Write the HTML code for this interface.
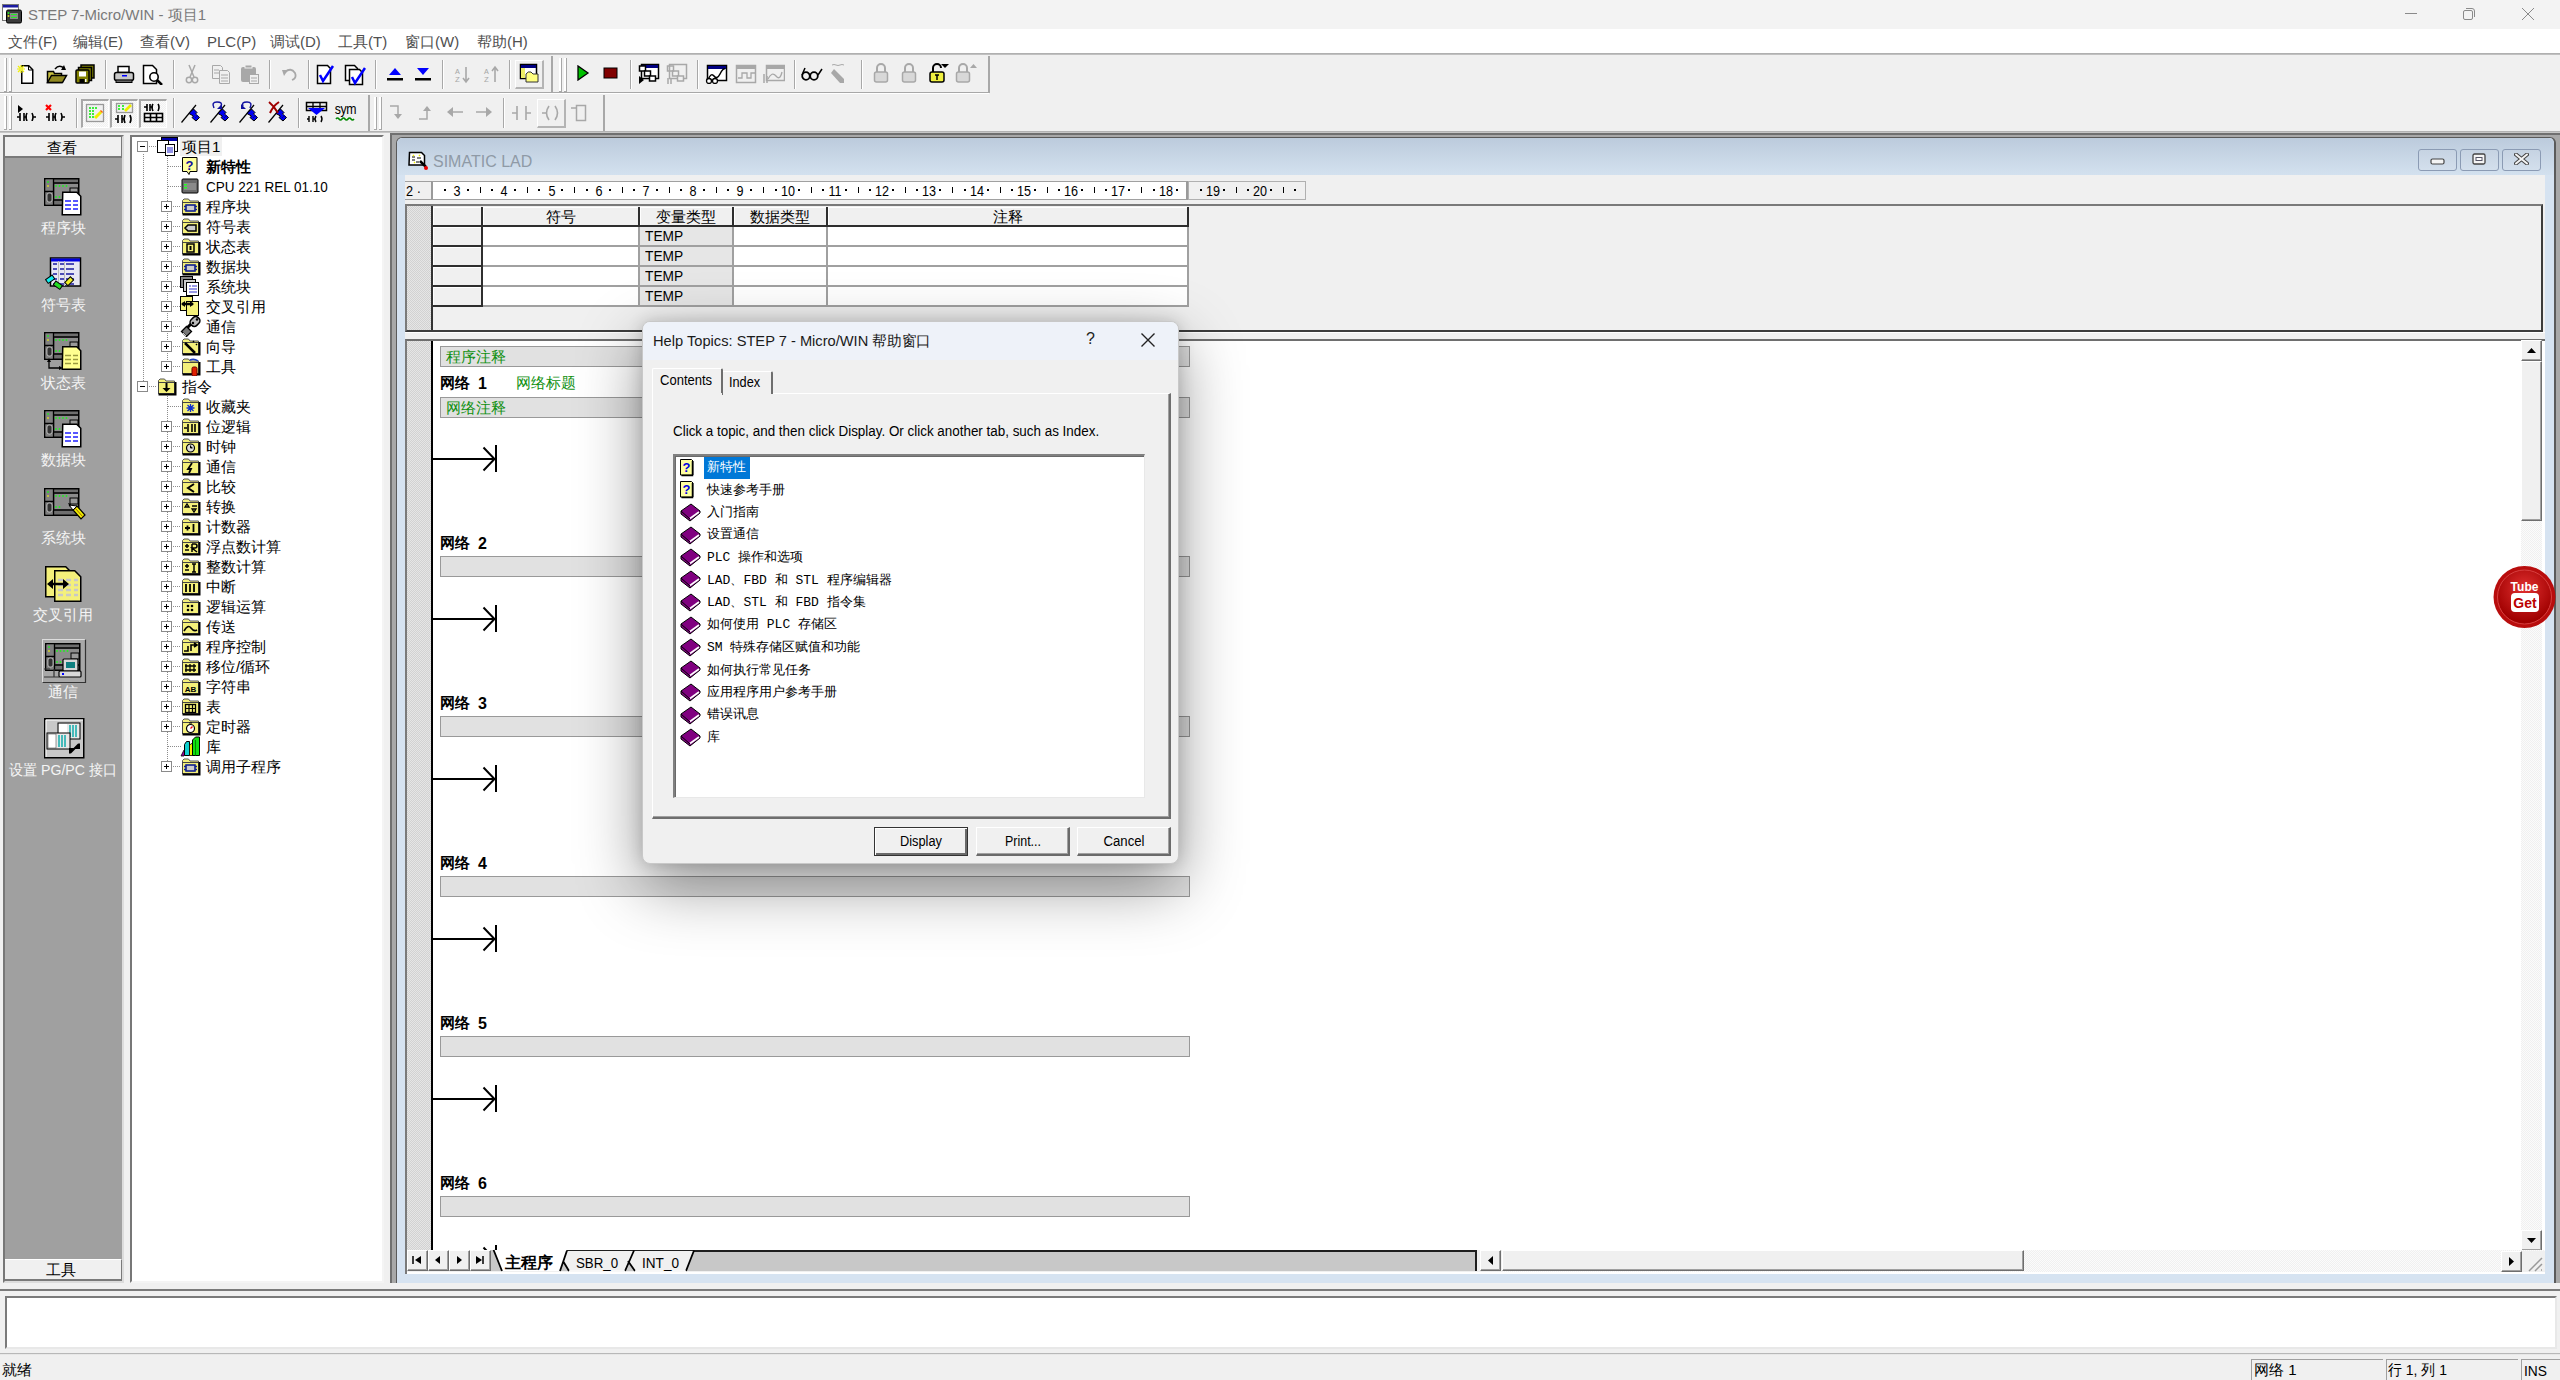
<!DOCTYPE html>
<html><head><meta charset="utf-8">
<style>
*{box-sizing:border-box;margin:0;padding:0}
html,body{width:2560px;height:1380px;overflow:hidden;background:#f0f0f0;font-family:"Liberation Sans",sans-serif;position:relative}
.a{position:absolute}
.t{position:absolute;white-space:nowrap;line-height:1}
.c{position:absolute;white-space:nowrap;line-height:1;text-align:center}
.dv{background:repeating-linear-gradient(to bottom,#8c8c8c 0 1px,transparent 1px 2px)}
.dh{background:repeating-linear-gradient(to right,#8c8c8c 0 1px,transparent 1px 2px)}
.chkl{background-color:#fbfbfb;background-image:linear-gradient(45deg,#f0f0f0 25%,transparent 25%,transparent 75%,#f0f0f0 75%),linear-gradient(45deg,#f0f0f0 25%,transparent 25%,transparent 75%,#f0f0f0 75%);background-size:2px 2px;background-position:0 0,1px 1px}
.chk{background-color:#e6e6e6;background-image:linear-gradient(45deg,#d2d2d2 25%,transparent 25%,transparent 75%,#d2d2d2 75%),linear-gradient(45deg,#d2d2d2 25%,transparent 25%,transparent 75%,#d2d2d2 75%);background-size:2px 2px;background-position:0 0,1px 1px}
</style></head><body>

<div class="a" style="left:0px;top:0px;width:2560px;height:29px;background:#f3f3f3"></div>
<div class="t" style="left:28px;top:7px;font-size:15px;color:#7a7a7a;font-weight:400;">STEP 7-Micro/WIN - 项目1</div>
<svg class="a" style="left:2px;top:4px" width="20" height="20" viewBox="0 0 20 20"><rect x="0.5" y="0.5" width="16" height="16" fill="#fff" stroke="#777"/><rect x="1" y="1" width="15" height="2.5" fill="#1a1aa0"/><rect x="4.5" y="6" width="15" height="13" rx="1.5" fill="#3a3a3a" stroke="#000"/><rect x="8" y="9" width="8" height="6" fill="#8a8a8a"/><circle cx="6.5" cy="9" r="1" fill="#2e2"/><circle cx="6.5" cy="12" r="1" fill="#dd2"/><path d="M9 10.5h6M9 13.5h6" stroke="#2e2" stroke-width="1"/></svg>
<div class="a" style="left:2405px;top:13px;width:12px;height:1px;background:#8a8a8a"></div>
<svg class="a" style="left:2462px;top:7px" width="14" height="14" viewBox="0 0 14 14"><rect x="1.5" y="3.5" width="9" height="9" rx="1.5" fill="none" stroke="#8a8a8a"/><path d="M4 1.5h6a2.5 2.5 0 0 1 2.5 2.5v6" fill="none" stroke="#8a8a8a"/></svg>
<svg class="a" style="left:2521px;top:7px" width="14" height="14" viewBox="0 0 14 14"><path d="M1 1L13 13M13 1L1 13" stroke="#8a8a8a" stroke-width="1"/></svg>
<div class="a" style="left:0px;top:29px;width:2560px;height:24px;background:#fff"></div>
<div class="a" style="left:0px;top:53px;width:2560px;height:2px;background:linear-gradient(#a8a8a8,#c8c8c8)"></div>
<div class="t" style="left:8px;top:34px;font-size:15px;color:#505050;font-weight:400;">文件(F)</div>
<div class="t" style="left:73px;top:34px;font-size:15px;color:#505050;font-weight:400;">编辑(E)</div>
<div class="t" style="left:140px;top:34px;font-size:15px;color:#505050;font-weight:400;">查看(V)</div>
<div class="t" style="left:207px;top:34px;font-size:15px;color:#505050;font-weight:400;">PLC(P)</div>
<div class="t" style="left:270px;top:34px;font-size:15px;color:#505050;font-weight:400;">调试(D)</div>
<div class="t" style="left:338px;top:34px;font-size:15px;color:#505050;font-weight:400;">工具(T)</div>
<div class="t" style="left:405px;top:34px;font-size:15px;color:#505050;font-weight:400;">窗口(W)</div>
<div class="t" style="left:477px;top:34px;font-size:15px;color:#505050;font-weight:400;">帮助(H)</div>
<div class="a" style="left:0px;top:131px;width:2560px;height:2px;background:linear-gradient(#a8a8a8,#d0d0d0)"></div>
<div class="a" style="left:3px;top:135px;width:121px;height:1148px;background:#a0a0a0;border:2px solid #777;border-right-color:#dcdcdc;border-bottom-color:#dcdcdc"></div>
<div class="a" style="left:5px;top:137px;width:117px;height:21px;background:#f0f0f0;border-bottom:2px solid #7a7a7a;border-right:1px solid #7a7a7a"></div>
<div class="c" style="left:3px;width:117px;top:140px;font-size:15px;color:#000">查看</div>
<div class="a" style="left:5px;top:1259px;width:117px;height:22px;background:#f0f0f0;border-top:1px solid #fff;border-bottom:2px solid #7a7a7a;border-right:1px solid #7a7a7a"></div>
<div class="c" style="left:2px;width:117px;top:1262px;font-size:15px;color:#000">工具</div>
<div class="c" style="left:4px;width:118px;top:220px;font-size:15px;color:#f4f4f4;">程序块</div>
<div class="c" style="left:4px;width:118px;top:297px;font-size:15px;color:#f4f4f4;">符号表</div>
<div class="c" style="left:4px;width:118px;top:375px;font-size:15px;color:#f4f4f4;">状态表</div>
<div class="c" style="left:4px;width:118px;top:452px;font-size:15px;color:#f4f4f4;">数据块</div>
<div class="c" style="left:4px;width:118px;top:530px;font-size:15px;color:#f4f4f4;">系统块</div>
<div class="c" style="left:4px;width:118px;top:607px;font-size:15px;color:#f4f4f4;">交叉引用</div>
<div class="c" style="left:4px;width:118px;top:684px;font-size:15px;color:#f4f4f4;">通信</div>
<div class="c" style="left:4px;width:118px;top:762px;font-size:15px;color:#f4f4f4;transform:scaleX(.94);">设置 PG/PC 接口</div>
<div class="a" style="left:130px;top:135px;width:254px;height:1148px;background:#fff;border:2px solid #777;border-right-color:#f4f4f4;border-bottom-color:#f4f4f4"></div>
<div class="a" style="left:390px;top:133px;width:2170px;height:1150px;background:#a8a8a8;border-top:2px solid #707070;border-left:2px solid #707070"></div>
<div class="a" style="left:396px;top:137px;width:2160px;height:1146px;background:#d6e3f1;border-radius:6px 6px 0 0;border:1px solid #5a5a5a;border-right:2px solid #5a5a5a;border-bottom:none"></div>
<div class="a" style="left:397px;top:138px;width:2157px;height:37px;background:linear-gradient(#bccbdc,#d3e1ef);border-radius:6px 6px 0 0"></div>
<div class="a" style="left:405px;top:175px;width:2140px;height:1099px;background:#f0f0f0"></div>
<div class="a" style="left:0px;top:1289px;width:2560px;height:2px;background:#7a7a7a"></div>
<div class="a" style="left:5px;top:1296px;width:2552px;height:53px;background:#fff;border:2px solid #7a7a7a;border-right-color:#e8e8e8;border-bottom-color:#e8e8e8"></div>
<div class="a" style="left:0px;top:1353px;width:2560px;height:2px;background:linear-gradient(#a0a0a0,#fff)"></div>
<div class="t" style="left:2px;top:1362px;font-size:15px;color:#000;font-weight:400;">就绪</div>
<div class="a dv" style="left:143px;top:154px;width:1px;height:232px;"></div>
<div class="a dv" style="left:167px;top:156px;width:1px;height:45px;"></div>
<div class="a dv" style="left:167px;top:213px;width:1px;height:153px;"></div>
<div class="a dv" style="left:167px;top:396px;width:1px;height:370px;"></div>
<div class="a" style="left:137px;top:141px;width:11px;height:11px;background:#fff;border:1px solid #8a8a8a"></div>
<div class="a" style="left:140px;top:146px;width:5px;height:1px;background:#000"></div>
<div class="a dh" style="left:149px;top:146px;width:7px;height:1px;"></div>
<svg class="a" style="left:157px;top:137px" width="22" height="19" viewBox="0 0 22 19"><rect x="4.5" y="0.5" width="16" height="14" fill="#fff" stroke="#000"/><rect x="5" y="1" width="15" height="3" fill="#00a"/><rect x="0.5" y="3.5" width="11" height="12" fill="#fff" stroke="#000"/><rect x="8.5" y="7.5" width="9" height="11" fill="#fff" stroke="#000"/><path d="M10 11h6M10 13h6M10 15h6" stroke="#22c"/></svg>
<div class="a" style="left:180px;top:137px;width:42px;height:19px;background:#f0f0f0"></div>
<div class="t" style="left:182px;top:139px;font-size:15px;color:#000;font-weight:400;">项目1</div>
<div class="a dh" style="left:168px;top:166px;width:13px;height:1px;"></div>
<svg class="a" style="left:181px;top:156px" width="18" height="20" viewBox="0 0 18 20"><path d="M1.5 1.5h14.5v14h-7l-1 3-2-3h-4.5z" fill="#ffff9c" stroke="#000"/><text x="8.5" y="13.5" font-size="13" font-weight="bold" fill="#1010a0" text-anchor="middle" font-family="Liberation Sans">?</text></svg>
<div class="t" style="left:206px;top:159px;font-size:15px;color:#000;font-weight:400;"><b>新特性</b></div>
<div class="a dh" style="left:168px;top:186px;width:13px;height:1px;"></div>
<svg class="a" style="left:181px;top:178px" width="18" height="16" viewBox="0 0 18 16"><rect x="1" y="1" width="16" height="14" rx="1" fill="#6a6a6a" stroke="#000"/><rect x="3" y="5" width="12" height="7" fill="#8a8a8a"/><rect x="3" y="6" width="3" height="1.5" fill="#2f2"/><rect x="3" y="9" width="3" height="1.5" fill="#2f2"/></svg>
<div class="t" style="left:206px;top:179px;font-size:15px;color:#000;font-weight:400;transform:scaleX(.9);transform-origin:left">CPU 221 REL 01.10</div>
<div class="a" style="left:161px;top:201px;width:11px;height:11px;background:#fff;border:1px solid #8a8a8a"></div>
<div class="a" style="left:164px;top:206px;width:5px;height:1px;background:#000"></div>
<div class="a" style="left:166px;top:204px;width:1px;height:5px;background:#000"></div>
<div class="a dh" style="left:173px;top:206px;width:8px;height:1px;"></div>
<svg class="a" style="left:181px;top:198px" width="21" height="18" viewBox="0 0 21 18"><path d="M1.5 4.5V2.5l1.5-1.5h4.5l1.5 2h8.5v1.5" fill="#f4f07a" stroke="#555" stroke-width="1"/><rect x="1.5" y="4.5" width="16" height="11" fill="#f4f07a" stroke="#444" stroke-width="1"/><path d="M18.5 4v12.5h-17" fill="none" stroke="#000" stroke-width="2"/><rect x="5" y="7" width="9" height="6" fill="#ccc" stroke="#102090" stroke-width="1.6"/><path d="M3 8.5h2M3 11.5h2M14 8.5h2M14 11.5h2" stroke="#102090" stroke-width="1.3"/></svg>
<div class="t" style="left:206px;top:199px;font-size:15px;color:#000;font-weight:400;">程序块</div>
<div class="a" style="left:161px;top:221px;width:11px;height:11px;background:#fff;border:1px solid #8a8a8a"></div>
<div class="a" style="left:164px;top:226px;width:5px;height:1px;background:#000"></div>
<div class="a" style="left:166px;top:224px;width:1px;height:5px;background:#000"></div>
<div class="a dh" style="left:173px;top:226px;width:8px;height:1px;"></div>
<svg class="a" style="left:181px;top:218px" width="21" height="18" viewBox="0 0 21 18"><path d="M1.5 4.5V2.5l1.5-1.5h4.5l1.5 2h8.5v1.5" fill="#f4f07a" stroke="#555" stroke-width="1"/><rect x="1.5" y="4.5" width="16" height="11" fill="#f4f07a" stroke="#444" stroke-width="1"/><path d="M18.5 4v12.5h-17" fill="none" stroke="#000" stroke-width="2"/><path d="M4 10l3-3h8v6h-8z" fill="#ccc" stroke="#000" stroke-width="1.5"/></svg>
<div class="t" style="left:206px;top:219px;font-size:15px;color:#000;font-weight:400;">符号表</div>
<div class="a" style="left:161px;top:241px;width:11px;height:11px;background:#fff;border:1px solid #8a8a8a"></div>
<div class="a" style="left:164px;top:246px;width:5px;height:1px;background:#000"></div>
<div class="a" style="left:166px;top:244px;width:1px;height:5px;background:#000"></div>
<div class="a dh" style="left:173px;top:246px;width:8px;height:1px;"></div>
<svg class="a" style="left:181px;top:238px" width="21" height="18" viewBox="0 0 21 18"><path d="M1.5 4.5V2.5l1.5-1.5h4.5l1.5 2h8.5v1.5" fill="#f4f07a" stroke="#555" stroke-width="1"/><rect x="1.5" y="4.5" width="16" height="11" fill="#f4f07a" stroke="#444" stroke-width="1"/><path d="M18.5 4v12.5h-17" fill="none" stroke="#000" stroke-width="2"/><rect x="6" y="6" width="7" height="8" fill="none" stroke="#000" stroke-width="1.5"/><rect x="8.5" y="8" width="2" height="4" fill="#000"/></svg>
<div class="t" style="left:206px;top:239px;font-size:15px;color:#000;font-weight:400;">状态表</div>
<div class="a" style="left:161px;top:261px;width:11px;height:11px;background:#fff;border:1px solid #8a8a8a"></div>
<div class="a" style="left:164px;top:266px;width:5px;height:1px;background:#000"></div>
<div class="a" style="left:166px;top:264px;width:1px;height:5px;background:#000"></div>
<div class="a dh" style="left:173px;top:266px;width:8px;height:1px;"></div>
<svg class="a" style="left:181px;top:258px" width="21" height="18" viewBox="0 0 21 18"><path d="M1.5 4.5V2.5l1.5-1.5h4.5l1.5 2h8.5v1.5" fill="#f4f07a" stroke="#555" stroke-width="1"/><rect x="1.5" y="4.5" width="16" height="11" fill="#f4f07a" stroke="#444" stroke-width="1"/><path d="M18.5 4v12.5h-17" fill="none" stroke="#000" stroke-width="2"/><rect x="5" y="7" width="9" height="6" fill="#ccc" stroke="#102090" stroke-width="1.6"/><path d="M3 8.5h2M3 11.5h2M14 8.5h2M14 11.5h2" stroke="#102090" stroke-width="1.3"/></svg>
<div class="t" style="left:206px;top:259px;font-size:15px;color:#000;font-weight:400;">数据块</div>
<div class="a" style="left:161px;top:281px;width:11px;height:11px;background:#fff;border:1px solid #8a8a8a"></div>
<div class="a" style="left:164px;top:286px;width:5px;height:1px;background:#000"></div>
<div class="a" style="left:166px;top:284px;width:1px;height:5px;background:#000"></div>
<div class="a dh" style="left:173px;top:286px;width:8px;height:1px;"></div>
<svg class="a" style="left:180px;top:276px" width="20" height="20" viewBox="0 0 20 20"><rect x="0.5" y="0.5" width="12" height="11" fill="#888" stroke="#000"/><rect x="3.5" y="3.5" width="12" height="12" fill="#ccc" stroke="#000"/><rect x="6.5" y="6.5" width="12" height="13" fill="#fff" stroke="#000"/><path d="M9 10h2M12 10h5M9 13h8M9 16h8" stroke="#33c"/></svg>
<div class="t" style="left:206px;top:279px;font-size:15px;color:#000;font-weight:400;">系统块</div>
<div class="a" style="left:161px;top:301px;width:11px;height:11px;background:#fff;border:1px solid #8a8a8a"></div>
<div class="a" style="left:164px;top:306px;width:5px;height:1px;background:#000"></div>
<div class="a" style="left:166px;top:304px;width:1px;height:5px;background:#000"></div>
<div class="a dh" style="left:173px;top:306px;width:8px;height:1px;"></div>
<svg class="a" style="left:180px;top:296px" width="20" height="20" viewBox="0 0 20 20"><rect x="0.5" y="0.5" width="12" height="14" fill="#f4f07a" stroke="#000"/><rect x="6.5" y="5.5" width="12" height="14" fill="#f4f07a" stroke="#000"/><path d="M2 8h11" stroke="#000" stroke-width="2.5"/><path d="M1 8l4-3v6zM14 8l-4-3v6z" fill="#000"/></svg>
<div class="t" style="left:206px;top:299px;font-size:15px;color:#000;font-weight:400;">交叉引用</div>
<div class="a" style="left:161px;top:321px;width:11px;height:11px;background:#fff;border:1px solid #8a8a8a"></div>
<div class="a" style="left:164px;top:326px;width:5px;height:1px;background:#000"></div>
<div class="a" style="left:166px;top:324px;width:1px;height:5px;background:#000"></div>
<div class="a dh" style="left:173px;top:326px;width:8px;height:1px;"></div>
<svg class="a" style="left:180px;top:315px" width="21" height="22" viewBox="0 0 21 22"><path d="M6 14l5-5" stroke="#000" stroke-width="3"/><rect x="11" y="1.5" width="8" height="10" rx="3.5" fill="#bbb" stroke="#000" stroke-width="1.5" transform="rotate(45 15 6.5)"/><circle cx="13" cy="8" r="1.2" fill="#000"/><circle cx="17" cy="4.5" r="1.2" fill="#000"/><path d="M1.5 16.5l5-5 5 5-5 5z" fill="#777" stroke="#000" stroke-width="1.3"/><path d="M3 18l3 3" stroke="#ccc" stroke-width="1"/></svg>
<div class="t" style="left:206px;top:319px;font-size:15px;color:#000;font-weight:400;">通信</div>
<div class="a" style="left:161px;top:341px;width:11px;height:11px;background:#fff;border:1px solid #8a8a8a"></div>
<div class="a" style="left:164px;top:346px;width:5px;height:1px;background:#000"></div>
<div class="a" style="left:166px;top:344px;width:1px;height:5px;background:#000"></div>
<div class="a dh" style="left:173px;top:346px;width:8px;height:1px;"></div>
<svg class="a" style="left:181px;top:338px" width="21" height="18" viewBox="0 0 21 18"><path d="M1.5 4.5V2.5l1.5-1.5h4.5l1.5 2h8.5v1.5" fill="#f4f07a" stroke="#555" stroke-width="1"/><rect x="1.5" y="4.5" width="16" height="11" fill="#f4f07a" stroke="#444" stroke-width="1"/><path d="M18.5 4v12.5h-17" fill="none" stroke="#000" stroke-width="2"/><path d="M4 5l10 10" stroke="#000" stroke-width="2.5"/><path d="M12 3l1 1M15 6l1 1" stroke="#000" stroke-width="1.5"/></svg>
<div class="t" style="left:206px;top:339px;font-size:15px;color:#000;font-weight:400;">向导</div>
<div class="a" style="left:161px;top:361px;width:11px;height:11px;background:#fff;border:1px solid #8a8a8a"></div>
<div class="a" style="left:164px;top:366px;width:5px;height:1px;background:#000"></div>
<div class="a" style="left:166px;top:364px;width:1px;height:5px;background:#000"></div>
<div class="a dh" style="left:173px;top:366px;width:8px;height:1px;"></div>
<svg class="a" style="left:181px;top:358px" width="21" height="18" viewBox="0 0 21 18"><path d="M1.5 4.5V2.5l1.5-1.5h4.5l1.5 2h8.5v1.5" fill="#f4f07a" stroke="#555" stroke-width="1"/><rect x="1.5" y="4.5" width="16" height="11" fill="#f4f07a" stroke="#444" stroke-width="1"/><path d="M18.5 4v12.5h-17" fill="none" stroke="#000" stroke-width="2"/><rect x="11" y="9" width="5" height="9" rx="1.5" fill="#e02000" stroke="#600"/><path d="M9 2q4-2 8 1" fill="none" stroke="#2040c0" stroke-width="1.6"/></svg>
<div class="t" style="left:206px;top:359px;font-size:15px;color:#000;font-weight:400;">工具</div>
<div class="a" style="left:137px;top:381px;width:11px;height:11px;background:#fff;border:1px solid #8a8a8a"></div>
<div class="a" style="left:140px;top:386px;width:5px;height:1px;background:#000"></div>
<div class="a dh" style="left:149px;top:386px;width:7px;height:1px;"></div>
<svg class="a" style="left:157px;top:378px" width="21" height="18" viewBox="0 0 21 18"><path d="M1.5 4.5V2.5l1.5-1.5h4.5l1.5 2h8.5v1.5" fill="#f4f07a" stroke="#555" stroke-width="1"/><rect x="1.5" y="4.5" width="16" height="11" fill="#f4f07a" stroke="#444" stroke-width="1"/><path d="M18.5 4v12.5h-17" fill="none" stroke="#000" stroke-width="2"/><path d="M9.5 5v6" stroke="#000" stroke-width="2"/><path d="M5.5 10h8l-4 4z" fill="#000"/></svg>
<div class="t" style="left:182px;top:379px;font-size:15px;color:#000;font-weight:400;">指令</div>
<div class="a dh" style="left:168px;top:406px;width:13px;height:1px;"></div>
<svg class="a" style="left:181px;top:398px" width="21" height="18" viewBox="0 0 21 18"><path d="M1.5 4.5V2.5l1.5-1.5h4.5l1.5 2h8.5v1.5" fill="#f4f07a" stroke="#555" stroke-width="1"/><rect x="1.5" y="4.5" width="16" height="11" fill="#f4f07a" stroke="#444" stroke-width="1"/><path d="M18.5 4v12.5h-17" fill="none" stroke="#000" stroke-width="2"/><path d="M9.5 6v8M5.5 10h8M6.5 7l6 6M12.5 7l-6 6" stroke="#1030d0" stroke-width="1.3"/></svg>
<div class="t" style="left:206px;top:399px;font-size:15px;color:#000;font-weight:400;">收藏夹</div>
<div class="a" style="left:161px;top:421px;width:11px;height:11px;background:#fff;border:1px solid #8a8a8a"></div>
<div class="a" style="left:164px;top:426px;width:5px;height:1px;background:#000"></div>
<div class="a" style="left:166px;top:424px;width:1px;height:5px;background:#000"></div>
<div class="a dh" style="left:173px;top:426px;width:8px;height:1px;"></div>
<svg class="a" style="left:181px;top:418px" width="21" height="18" viewBox="0 0 21 18"><path d="M1.5 4.5V2.5l1.5-1.5h4.5l1.5 2h8.5v1.5" fill="#f4f07a" stroke="#555" stroke-width="1"/><rect x="1.5" y="4.5" width="16" height="11" fill="#f4f07a" stroke="#444" stroke-width="1"/><path d="M18.5 4v12.5h-17" fill="none" stroke="#000" stroke-width="2"/><path d="M3 10h3M7 6v8M11 6v8M14 6v8" stroke="#000" stroke-width="1.6"/></svg>
<div class="t" style="left:206px;top:419px;font-size:15px;color:#000;font-weight:400;">位逻辑</div>
<div class="a" style="left:161px;top:441px;width:11px;height:11px;background:#fff;border:1px solid #8a8a8a"></div>
<div class="a" style="left:164px;top:446px;width:5px;height:1px;background:#000"></div>
<div class="a" style="left:166px;top:444px;width:1px;height:5px;background:#000"></div>
<div class="a dh" style="left:173px;top:446px;width:8px;height:1px;"></div>
<svg class="a" style="left:181px;top:438px" width="21" height="18" viewBox="0 0 21 18"><path d="M1.5 4.5V2.5l1.5-1.5h4.5l1.5 2h8.5v1.5" fill="#f4f07a" stroke="#555" stroke-width="1"/><rect x="1.5" y="4.5" width="16" height="11" fill="#f4f07a" stroke="#444" stroke-width="1"/><path d="M18.5 4v12.5h-17" fill="none" stroke="#000" stroke-width="2"/><circle cx="9.5" cy="10" r="4" fill="#ddd" stroke="#000" stroke-width="1.2"/><path d="M9.5 7.5v2.5h2" stroke="#000" stroke-width="1"/></svg>
<div class="t" style="left:206px;top:439px;font-size:15px;color:#000;font-weight:400;">时钟</div>
<div class="a" style="left:161px;top:461px;width:11px;height:11px;background:#fff;border:1px solid #8a8a8a"></div>
<div class="a" style="left:164px;top:466px;width:5px;height:1px;background:#000"></div>
<div class="a" style="left:166px;top:464px;width:1px;height:5px;background:#000"></div>
<div class="a dh" style="left:173px;top:466px;width:8px;height:1px;"></div>
<svg class="a" style="left:181px;top:458px" width="21" height="18" viewBox="0 0 21 18"><path d="M1.5 4.5V2.5l1.5-1.5h4.5l1.5 2h8.5v1.5" fill="#f4f07a" stroke="#555" stroke-width="1"/><rect x="1.5" y="4.5" width="16" height="11" fill="#f4f07a" stroke="#444" stroke-width="1"/><path d="M18.5 4v12.5h-17" fill="none" stroke="#000" stroke-width="2"/><path d="M11 5l-4 6h3l-2 4" fill="none" stroke="#000" stroke-width="1.8"/></svg>
<div class="t" style="left:206px;top:459px;font-size:15px;color:#000;font-weight:400;">通信</div>
<div class="a" style="left:161px;top:481px;width:11px;height:11px;background:#fff;border:1px solid #8a8a8a"></div>
<div class="a" style="left:164px;top:486px;width:5px;height:1px;background:#000"></div>
<div class="a" style="left:166px;top:484px;width:1px;height:5px;background:#000"></div>
<div class="a dh" style="left:173px;top:486px;width:8px;height:1px;"></div>
<svg class="a" style="left:181px;top:478px" width="21" height="18" viewBox="0 0 21 18"><path d="M1.5 4.5V2.5l1.5-1.5h4.5l1.5 2h8.5v1.5" fill="#f4f07a" stroke="#555" stroke-width="1"/><rect x="1.5" y="4.5" width="16" height="11" fill="#f4f07a" stroke="#444" stroke-width="1"/><path d="M18.5 4v12.5h-17" fill="none" stroke="#000" stroke-width="2"/><path d="M13 6l-6 4 6 4" fill="none" stroke="#000" stroke-width="2"/></svg>
<div class="t" style="left:206px;top:479px;font-size:15px;color:#000;font-weight:400;">比较</div>
<div class="a" style="left:161px;top:501px;width:11px;height:11px;background:#fff;border:1px solid #8a8a8a"></div>
<div class="a" style="left:164px;top:506px;width:5px;height:1px;background:#000"></div>
<div class="a" style="left:166px;top:504px;width:1px;height:5px;background:#000"></div>
<div class="a dh" style="left:173px;top:506px;width:8px;height:1px;"></div>
<svg class="a" style="left:181px;top:498px" width="21" height="18" viewBox="0 0 21 18"><path d="M1.5 4.5V2.5l1.5-1.5h4.5l1.5 2h8.5v1.5" fill="#f4f07a" stroke="#555" stroke-width="1"/><rect x="1.5" y="4.5" width="16" height="11" fill="#f4f07a" stroke="#444" stroke-width="1"/><path d="M18.5 4v12.5h-17" fill="none" stroke="#000" stroke-width="2"/><path d="M4 9l2-3 2 3zM11 8h5M11 11l2 3 2-3z" fill="none" stroke="#000" stroke-width="1.3"/></svg>
<div class="t" style="left:206px;top:499px;font-size:15px;color:#000;font-weight:400;">转换</div>
<div class="a" style="left:161px;top:521px;width:11px;height:11px;background:#fff;border:1px solid #8a8a8a"></div>
<div class="a" style="left:164px;top:526px;width:5px;height:1px;background:#000"></div>
<div class="a" style="left:166px;top:524px;width:1px;height:5px;background:#000"></div>
<div class="a dh" style="left:173px;top:526px;width:8px;height:1px;"></div>
<svg class="a" style="left:181px;top:518px" width="21" height="18" viewBox="0 0 21 18"><path d="M1.5 4.5V2.5l1.5-1.5h4.5l1.5 2h8.5v1.5" fill="#f4f07a" stroke="#555" stroke-width="1"/><rect x="1.5" y="4.5" width="16" height="11" fill="#f4f07a" stroke="#444" stroke-width="1"/><path d="M18.5 4v12.5h-17" fill="none" stroke="#000" stroke-width="2"/><path d="M4 10h5M6.5 7.5v5M12.5 6v8" stroke="#000" stroke-width="1.8"/></svg>
<div class="t" style="left:206px;top:519px;font-size:15px;color:#000;font-weight:400;">计数器</div>
<div class="a" style="left:161px;top:541px;width:11px;height:11px;background:#fff;border:1px solid #8a8a8a"></div>
<div class="a" style="left:164px;top:546px;width:5px;height:1px;background:#000"></div>
<div class="a" style="left:166px;top:544px;width:1px;height:5px;background:#000"></div>
<div class="a dh" style="left:173px;top:546px;width:8px;height:1px;"></div>
<svg class="a" style="left:181px;top:538px" width="21" height="18" viewBox="0 0 21 18"><path d="M1.5 4.5V2.5l1.5-1.5h4.5l1.5 2h8.5v1.5" fill="#f4f07a" stroke="#555" stroke-width="1"/><rect x="1.5" y="4.5" width="16" height="11" fill="#f4f07a" stroke="#444" stroke-width="1"/><path d="M18.5 4v12.5h-17" fill="none" stroke="#000" stroke-width="2"/><path d="M4 8h4M6 6v4M4 12h4M11 6v8M11 6h3q2 0 2 2t-2 2h-3l5 4" fill="none" stroke="#000" stroke-width="1.5"/></svg>
<div class="t" style="left:206px;top:539px;font-size:15px;color:#000;font-weight:400;">浮点数计算</div>
<div class="a" style="left:161px;top:561px;width:11px;height:11px;background:#fff;border:1px solid #8a8a8a"></div>
<div class="a" style="left:164px;top:566px;width:5px;height:1px;background:#000"></div>
<div class="a" style="left:166px;top:564px;width:1px;height:5px;background:#000"></div>
<div class="a dh" style="left:173px;top:566px;width:8px;height:1px;"></div>
<svg class="a" style="left:181px;top:558px" width="21" height="18" viewBox="0 0 21 18"><path d="M1.5 4.5V2.5l1.5-1.5h4.5l1.5 2h8.5v1.5" fill="#f4f07a" stroke="#555" stroke-width="1"/><rect x="1.5" y="4.5" width="16" height="11" fill="#f4f07a" stroke="#444" stroke-width="1"/><path d="M18.5 4v12.5h-17" fill="none" stroke="#000" stroke-width="2"/><path d="M4 8h4M6 6v4M4 12h4M11 6h4M13 6v8M11 14h4" fill="none" stroke="#000" stroke-width="1.5"/></svg>
<div class="t" style="left:206px;top:559px;font-size:15px;color:#000;font-weight:400;">整数计算</div>
<div class="a" style="left:161px;top:581px;width:11px;height:11px;background:#fff;border:1px solid #8a8a8a"></div>
<div class="a" style="left:164px;top:586px;width:5px;height:1px;background:#000"></div>
<div class="a" style="left:166px;top:584px;width:1px;height:5px;background:#000"></div>
<div class="a dh" style="left:173px;top:586px;width:8px;height:1px;"></div>
<svg class="a" style="left:181px;top:578px" width="21" height="18" viewBox="0 0 21 18"><path d="M1.5 4.5V2.5l1.5-1.5h4.5l1.5 2h8.5v1.5" fill="#f4f07a" stroke="#555" stroke-width="1"/><rect x="1.5" y="4.5" width="16" height="11" fill="#f4f07a" stroke="#444" stroke-width="1"/><path d="M18.5 4v12.5h-17" fill="none" stroke="#000" stroke-width="2"/><path d="M5 6v8M9 6v8M13 6v8" stroke="#000" stroke-width="1.8"/></svg>
<div class="t" style="left:206px;top:579px;font-size:15px;color:#000;font-weight:400;">中断</div>
<div class="a" style="left:161px;top:601px;width:11px;height:11px;background:#fff;border:1px solid #8a8a8a"></div>
<div class="a" style="left:164px;top:606px;width:5px;height:1px;background:#000"></div>
<div class="a" style="left:166px;top:604px;width:1px;height:5px;background:#000"></div>
<div class="a dh" style="left:173px;top:606px;width:8px;height:1px;"></div>
<svg class="a" style="left:181px;top:598px" width="21" height="18" viewBox="0 0 21 18"><path d="M1.5 4.5V2.5l1.5-1.5h4.5l1.5 2h8.5v1.5" fill="#f4f07a" stroke="#555" stroke-width="1"/><rect x="1.5" y="4.5" width="16" height="11" fill="#f4f07a" stroke="#444" stroke-width="1"/><path d="M18.5 4v12.5h-17" fill="none" stroke="#000" stroke-width="2"/><circle cx="7" cy="8" r="1.3" fill="#000"/><circle cx="11" cy="8" r="1.3" fill="#000"/><circle cx="7" cy="12" r="1.3" fill="#000"/><circle cx="11" cy="12" r="1.3" fill="#000"/></svg>
<div class="t" style="left:206px;top:599px;font-size:15px;color:#000;font-weight:400;">逻辑运算</div>
<div class="a" style="left:161px;top:621px;width:11px;height:11px;background:#fff;border:1px solid #8a8a8a"></div>
<div class="a" style="left:164px;top:626px;width:5px;height:1px;background:#000"></div>
<div class="a" style="left:166px;top:624px;width:1px;height:5px;background:#000"></div>
<div class="a dh" style="left:173px;top:626px;width:8px;height:1px;"></div>
<svg class="a" style="left:181px;top:618px" width="21" height="18" viewBox="0 0 21 18"><path d="M1.5 4.5V2.5l1.5-1.5h4.5l1.5 2h8.5v1.5" fill="#f4f07a" stroke="#555" stroke-width="1"/><rect x="1.5" y="4.5" width="16" height="11" fill="#f4f07a" stroke="#444" stroke-width="1"/><path d="M18.5 4v12.5h-17" fill="none" stroke="#000" stroke-width="2"/><path d="M3 13q4-7 7-3t6 2" fill="none" stroke="#000" stroke-width="1.6"/></svg>
<div class="t" style="left:206px;top:619px;font-size:15px;color:#000;font-weight:400;">传送</div>
<div class="a" style="left:161px;top:641px;width:11px;height:11px;background:#fff;border:1px solid #8a8a8a"></div>
<div class="a" style="left:164px;top:646px;width:5px;height:1px;background:#000"></div>
<div class="a" style="left:166px;top:644px;width:1px;height:5px;background:#000"></div>
<div class="a dh" style="left:173px;top:646px;width:8px;height:1px;"></div>
<svg class="a" style="left:181px;top:638px" width="21" height="18" viewBox="0 0 21 18"><path d="M1.5 4.5V2.5l1.5-1.5h4.5l1.5 2h8.5v1.5" fill="#f4f07a" stroke="#555" stroke-width="1"/><rect x="1.5" y="4.5" width="16" height="11" fill="#f4f07a" stroke="#444" stroke-width="1"/><path d="M18.5 4v12.5h-17" fill="none" stroke="#000" stroke-width="2"/><path d="M3 13h4V8M10 13V7h5M13 5l3 2-3 2" fill="none" stroke="#000" stroke-width="1.6"/></svg>
<div class="t" style="left:206px;top:639px;font-size:15px;color:#000;font-weight:400;">程序控制</div>
<div class="a" style="left:161px;top:661px;width:11px;height:11px;background:#fff;border:1px solid #8a8a8a"></div>
<div class="a" style="left:164px;top:666px;width:5px;height:1px;background:#000"></div>
<div class="a" style="left:166px;top:664px;width:1px;height:5px;background:#000"></div>
<div class="a dh" style="left:173px;top:666px;width:8px;height:1px;"></div>
<svg class="a" style="left:181px;top:658px" width="21" height="18" viewBox="0 0 21 18"><path d="M1.5 4.5V2.5l1.5-1.5h4.5l1.5 2h8.5v1.5" fill="#f4f07a" stroke="#555" stroke-width="1"/><rect x="1.5" y="4.5" width="16" height="11" fill="#f4f07a" stroke="#444" stroke-width="1"/><path d="M18.5 4v12.5h-17" fill="none" stroke="#000" stroke-width="2"/><path d="M4 8h11M4 12h11M5 6v8M9 6v8M13 6v8" stroke="#000" stroke-width="1.3"/></svg>
<div class="t" style="left:206px;top:659px;font-size:15px;color:#000;font-weight:400;">移位/循环</div>
<div class="a" style="left:161px;top:681px;width:11px;height:11px;background:#fff;border:1px solid #8a8a8a"></div>
<div class="a" style="left:164px;top:686px;width:5px;height:1px;background:#000"></div>
<div class="a" style="left:166px;top:684px;width:1px;height:5px;background:#000"></div>
<div class="a dh" style="left:173px;top:686px;width:8px;height:1px;"></div>
<svg class="a" style="left:181px;top:678px" width="21" height="18" viewBox="0 0 21 18"><path d="M1.5 4.5V2.5l1.5-1.5h4.5l1.5 2h8.5v1.5" fill="#f4f07a" stroke="#555" stroke-width="1"/><rect x="1.5" y="4.5" width="16" height="11" fill="#f4f07a" stroke="#444" stroke-width="1"/><path d="M18.5 4v12.5h-17" fill="none" stroke="#000" stroke-width="2"/><text x="9.5" y="14" font-size="8" font-weight="bold" text-anchor="middle" font-family="Liberation Sans" fill="#000">AB</text></svg>
<div class="t" style="left:206px;top:679px;font-size:15px;color:#000;font-weight:400;">字符串</div>
<div class="a" style="left:161px;top:701px;width:11px;height:11px;background:#fff;border:1px solid #8a8a8a"></div>
<div class="a" style="left:164px;top:706px;width:5px;height:1px;background:#000"></div>
<div class="a" style="left:166px;top:704px;width:1px;height:5px;background:#000"></div>
<div class="a dh" style="left:173px;top:706px;width:8px;height:1px;"></div>
<svg class="a" style="left:181px;top:698px" width="21" height="18" viewBox="0 0 21 18"><path d="M1.5 4.5V2.5l1.5-1.5h4.5l1.5 2h8.5v1.5" fill="#f4f07a" stroke="#555" stroke-width="1"/><rect x="1.5" y="4.5" width="16" height="11" fill="#f4f07a" stroke="#444" stroke-width="1"/><path d="M18.5 4v12.5h-17" fill="none" stroke="#000" stroke-width="2"/><rect x="4.5" y="6.5" width="10" height="8" fill="none" stroke="#000" stroke-width="1.3"/><path d="M4 10.5h11M8 6v9M11.5 6v9" stroke="#000" stroke-width="1.2"/></svg>
<div class="t" style="left:206px;top:699px;font-size:15px;color:#000;font-weight:400;">表</div>
<div class="a" style="left:161px;top:721px;width:11px;height:11px;background:#fff;border:1px solid #8a8a8a"></div>
<div class="a" style="left:164px;top:726px;width:5px;height:1px;background:#000"></div>
<div class="a" style="left:166px;top:724px;width:1px;height:5px;background:#000"></div>
<div class="a dh" style="left:173px;top:726px;width:8px;height:1px;"></div>
<svg class="a" style="left:181px;top:718px" width="21" height="18" viewBox="0 0 21 18"><path d="M1.5 4.5V2.5l1.5-1.5h4.5l1.5 2h8.5v1.5" fill="#f4f07a" stroke="#555" stroke-width="1"/><rect x="1.5" y="4.5" width="16" height="11" fill="#f4f07a" stroke="#444" stroke-width="1"/><path d="M18.5 4v12.5h-17" fill="none" stroke="#000" stroke-width="2"/><circle cx="9.5" cy="10.5" r="4" fill="#fff" stroke="#000" stroke-width="1.2"/><path d="M9.5 10.5l2-2" stroke="#e00" stroke-width="1.2"/><path d="M8 5h3" stroke="#000"/></svg>
<div class="t" style="left:206px;top:719px;font-size:15px;color:#000;font-weight:400;">定时器</div>
<div class="a dh" style="left:168px;top:746px;width:13px;height:1px;"></div>
<svg class="a" style="left:180px;top:736px" width="21" height="21" viewBox="0 0 21 21"><path d="M1 20l3-6 2 1-2 5z" fill="#a000a0" stroke="#000" stroke-width=".8"/><path d="M4.5 19.5V8.5l2-3h3v14z" fill="#10d0d0" stroke="#000" stroke-width="1"/><path d="M9.5 19.5V9l3-2v12.5z" fill="#f0f000" stroke="#000" stroke-width=".8"/><path d="M12.5 19.5V4l3-3h4v18.5z" fill="#10e010" stroke="#000" stroke-width="1"/><path d="M15.5 4v15.5" stroke="#080" stroke-width="1"/></svg>
<div class="t" style="left:206px;top:739px;font-size:15px;color:#000;font-weight:400;">库</div>
<div class="a" style="left:161px;top:761px;width:11px;height:11px;background:#fff;border:1px solid #8a8a8a"></div>
<div class="a" style="left:164px;top:766px;width:5px;height:1px;background:#000"></div>
<div class="a" style="left:166px;top:764px;width:1px;height:5px;background:#000"></div>
<div class="a dh" style="left:173px;top:766px;width:8px;height:1px;"></div>
<svg class="a" style="left:181px;top:758px" width="21" height="18" viewBox="0 0 21 18"><path d="M1.5 4.5V2.5l1.5-1.5h4.5l1.5 2h8.5v1.5" fill="#f4f07a" stroke="#555" stroke-width="1"/><rect x="1.5" y="4.5" width="16" height="11" fill="#f4f07a" stroke="#444" stroke-width="1"/><path d="M18.5 4v12.5h-17" fill="none" stroke="#000" stroke-width="2"/><rect x="5" y="7" width="9" height="6" fill="#ccc" stroke="#102090" stroke-width="1.6"/><path d="M3 8.5h2M3 11.5h2M14 8.5h2M14 11.5h2" stroke="#102090" stroke-width="1.3"/></svg>
<div class="t" style="left:206px;top:759px;font-size:15px;color:#000;font-weight:400;">调用子程序</div>
<svg class="a" style="left:408px;top:150px" width="21" height="21" viewBox="0 0 21 21"><path d="M1.5 2.5h12l3 3v9.5h-15.5z" fill="#fff" stroke="#000" stroke-width="1.5"/><path d="M4 7h3M4 10h3M9 8h4M8 12h3" stroke="#000" stroke-width="1.2"/><path d="M5 5l1 1M11 5l1 1M6 13l1-1" stroke="#ee0" stroke-width="1.5"/><path d="M12 11l6 6" stroke="#000" stroke-width="2.5"/><circle cx="18" cy="18" r="2" fill="#e00"/></svg>
<div class="t" style="left:433px;top:154px;font-size:16px;color:#8f9aa6;font-weight:400;">SIMATIC LAD</div>
<div class="a" style="left:2418px;top:149px;width:39px;height:22px;border:1px solid #8b9bb4;border-radius:3px;background:linear-gradient(#c6d3e2,#d3dfec)"></div>
<div class="a" style="left:2460px;top:149px;width:39px;height:22px;border:1px solid #8b9bb4;border-radius:3px;background:linear-gradient(#c6d3e2,#d3dfec)"></div>
<div class="a" style="left:2502px;top:149px;width:39px;height:22px;border:1px solid #8b9bb4;border-radius:3px;background:linear-gradient(#c6d3e2,#d3dfec)"></div>
<svg class="a" style="left:2430px;top:157px" width="15" height="8" viewBox="0 0 15 8"><rect x="1" y="2" width="13" height="5" rx="1.5" fill="#f4f4f4" stroke="#444" stroke-width="1.2"/></svg>
<svg class="a" style="left:2472px;top:153px" width="14" height="12" viewBox="0 0 14 12"><rect x="1" y="1" width="12" height="10" rx="1.5" fill="#f4f4f4" stroke="#444" stroke-width="1.3"/><rect x="4" y="4.5" width="6" height="3" fill="#fff" stroke="#556" stroke-width="1"/></svg>
<svg class="a" style="left:2514px;top:153px" width="15" height="12" viewBox="0 0 15 12"><path d="M2 1.5L13 10.5M13 1.5L2 10.5" stroke="#444" stroke-width="4" stroke-linecap="round"/><path d="M2 1.5L13 10.5M13 1.5L2 10.5" stroke="#f4f4f4" stroke-width="2" stroke-linecap="round"/></svg>
<div class="a" style="left:405px;top:181px;width:26px;height:19px;border-top:1px solid #a0a0a0;border-bottom:1px solid #a0a0a0"></div>
<div class="t" style="left:406px;top:183px;font-size:15px;color:#000;font-weight:400;transform:scaleX(.85);transform-origin:left">2 ·</div>
<div class="a" style="left:431px;top:181px;width:757px;height:19px;background:#fff;border:1px solid #a0a0a0;border-left:2px solid #9a9a9a;border-right:2px solid #9a9a9a"></div>
<div class="a" style="left:1188px;top:181px;width:118px;height:19px;background:#f0f0f0;border:1px solid #b0b0b0"></div>
<div class="c" style="left:447.0px;width:20px;top:184px;font-size:14px;transform:scaleX(.9)">3</div><div class="a" style="left:444px;top:189px;width:2px;height:2px;background:#000"></div><div class="a" style="left:467px;top:189px;width:2px;height:2px;background:#000"></div><div class="a" style="left:480px;top:187px;width:1px;height:6px;background:#000"></div><div class="c" style="left:494.2px;width:20px;top:184px;font-size:14px;transform:scaleX(.9)">4</div><div class="a" style="left:491px;top:189px;width:2px;height:2px;background:#000"></div><div class="a" style="left:514px;top:189px;width:2px;height:2px;background:#000"></div><div class="a" style="left:527px;top:187px;width:1px;height:6px;background:#000"></div><div class="c" style="left:541.5px;width:20px;top:184px;font-size:14px;transform:scaleX(.9)">5</div><div class="a" style="left:538px;top:189px;width:2px;height:2px;background:#000"></div><div class="a" style="left:561px;top:189px;width:2px;height:2px;background:#000"></div><div class="a" style="left:574px;top:187px;width:1px;height:6px;background:#000"></div><div class="c" style="left:588.7px;width:20px;top:184px;font-size:14px;transform:scaleX(.9)">6</div><div class="a" style="left:586px;top:189px;width:2px;height:2px;background:#000"></div><div class="a" style="left:609px;top:189px;width:2px;height:2px;background:#000"></div><div class="a" style="left:622px;top:187px;width:1px;height:6px;background:#000"></div><div class="c" style="left:636.0px;width:20px;top:184px;font-size:14px;transform:scaleX(.9)">7</div><div class="a" style="left:633px;top:189px;width:2px;height:2px;background:#000"></div><div class="a" style="left:656px;top:189px;width:2px;height:2px;background:#000"></div><div class="a" style="left:669px;top:187px;width:1px;height:6px;background:#000"></div><div class="c" style="left:683.2px;width:20px;top:184px;font-size:14px;transform:scaleX(.9)">8</div><div class="a" style="left:680px;top:189px;width:2px;height:2px;background:#000"></div><div class="a" style="left:703px;top:189px;width:2px;height:2px;background:#000"></div><div class="a" style="left:716px;top:187px;width:1px;height:6px;background:#000"></div><div class="c" style="left:730.4px;width:20px;top:184px;font-size:14px;transform:scaleX(.9)">9</div><div class="a" style="left:727px;top:189px;width:2px;height:2px;background:#000"></div><div class="a" style="left:750px;top:189px;width:2px;height:2px;background:#000"></div><div class="a" style="left:763px;top:187px;width:1px;height:6px;background:#000"></div><div class="c" style="left:777.7px;width:20px;top:184px;font-size:14px;transform:scaleX(.9)">10</div><div class="a" style="left:775px;top:189px;width:2px;height:2px;background:#000"></div><div class="a" style="left:798px;top:189px;width:2px;height:2px;background:#000"></div><div class="a" style="left:811px;top:187px;width:1px;height:6px;background:#000"></div><div class="c" style="left:824.9px;width:20px;top:184px;font-size:14px;transform:scaleX(.9)">11</div><div class="a" style="left:822px;top:189px;width:2px;height:2px;background:#000"></div><div class="a" style="left:845px;top:189px;width:2px;height:2px;background:#000"></div><div class="a" style="left:858px;top:187px;width:1px;height:6px;background:#000"></div><div class="c" style="left:872.2px;width:20px;top:184px;font-size:14px;transform:scaleX(.9)">12</div><div class="a" style="left:869px;top:189px;width:2px;height:2px;background:#000"></div><div class="a" style="left:892px;top:189px;width:2px;height:2px;background:#000"></div><div class="a" style="left:905px;top:187px;width:1px;height:6px;background:#000"></div><div class="c" style="left:919.4px;width:20px;top:184px;font-size:14px;transform:scaleX(.9)">13</div><div class="a" style="left:916px;top:189px;width:2px;height:2px;background:#000"></div><div class="a" style="left:939px;top:189px;width:2px;height:2px;background:#000"></div><div class="a" style="left:952px;top:187px;width:1px;height:6px;background:#000"></div><div class="c" style="left:966.6px;width:20px;top:184px;font-size:14px;transform:scaleX(.9)">14</div><div class="a" style="left:964px;top:189px;width:2px;height:2px;background:#000"></div><div class="a" style="left:987px;top:189px;width:2px;height:2px;background:#000"></div><div class="a" style="left:1000px;top:187px;width:1px;height:6px;background:#000"></div><div class="c" style="left:1013.9px;width:20px;top:184px;font-size:14px;transform:scaleX(.9)">15</div><div class="a" style="left:1011px;top:189px;width:2px;height:2px;background:#000"></div><div class="a" style="left:1034px;top:189px;width:2px;height:2px;background:#000"></div><div class="a" style="left:1047px;top:187px;width:1px;height:6px;background:#000"></div><div class="c" style="left:1061.1px;width:20px;top:184px;font-size:14px;transform:scaleX(.9)">16</div><div class="a" style="left:1058px;top:189px;width:2px;height:2px;background:#000"></div><div class="a" style="left:1081px;top:189px;width:2px;height:2px;background:#000"></div><div class="a" style="left:1094px;top:187px;width:1px;height:6px;background:#000"></div><div class="c" style="left:1108.4px;width:20px;top:184px;font-size:14px;transform:scaleX(.9)">17</div><div class="a" style="left:1105px;top:189px;width:2px;height:2px;background:#000"></div><div class="a" style="left:1128px;top:189px;width:2px;height:2px;background:#000"></div><div class="a" style="left:1141px;top:187px;width:1px;height:6px;background:#000"></div><div class="c" style="left:1155.6px;width:20px;top:184px;font-size:14px;transform:scaleX(.9)">18</div><div class="a" style="left:1153px;top:189px;width:2px;height:2px;background:#000"></div><div class="a" style="left:1176px;top:189px;width:2px;height:2px;background:#000"></div><div class="c" style="left:1202.8px;width:20px;top:184px;font-size:14px;transform:scaleX(.9)">19</div><div class="a" style="left:1200px;top:189px;width:2px;height:2px;background:#000"></div><div class="a" style="left:1223px;top:189px;width:2px;height:2px;background:#000"></div><div class="a" style="left:1236px;top:187px;width:1px;height:6px;background:#000"></div><div class="c" style="left:1250.1px;width:20px;top:184px;font-size:14px;transform:scaleX(.9)">20</div><div class="a" style="left:1247px;top:189px;width:2px;height:2px;background:#000"></div><div class="a" style="left:1270px;top:189px;width:2px;height:2px;background:#000"></div><div class="a" style="left:1283px;top:187px;width:1px;height:6px;background:#000"></div><div class="a" style="left:1294px;top:189px;width:2px;height:2px;background:#000"></div>
<div class="a" style="left:405px;top:204px;width:2138px;height:128px;background:#f0f0f0;border-top:2px solid #7a7a7a;border-left:2px solid #7a7a7a;border-bottom:2px solid #3c3c3c;border-right:2px solid #3c3c3c"></div>
<div class="a chk" style="left:407px;top:206px;width:24px;height:124px;"></div>
<div class="a" style="left:431px;top:206px;width:2px;height:124px;background:#333"></div>
<div class="a" style="left:433px;top:207px;width:48px;height:18px;background:#f0f0f0;border-top:1px solid #fff;border-left:1px solid #fff"></div>
<div class="a" style="left:483px;top:207px;width:155px;height:18px;background:#f0f0f0;border-top:1px solid #fff;border-left:1px solid #fff"></div>
<div class="a" style="left:640px;top:207px;width:92px;height:18px;background:#f0f0f0;border-top:1px solid #fff;border-left:1px solid #fff"></div>
<div class="a" style="left:734px;top:207px;width:92px;height:18px;background:#f0f0f0;border-top:1px solid #fff;border-left:1px solid #fff"></div>
<div class="a" style="left:828px;top:207px;width:359px;height:18px;background:#f0f0f0;border-top:1px solid #fff;border-left:1px solid #fff"></div>
<div class="a" style="left:433px;top:225px;width:755px;height:2px;background:#2e2e2e"></div>
<div class="a" style="left:481px;top:207px;width:2px;height:20px;background:#2e2e2e"></div>
<div class="a" style="left:638px;top:207px;width:2px;height:20px;background:#2e2e2e"></div>
<div class="a" style="left:732px;top:207px;width:2px;height:20px;background:#2e2e2e"></div>
<div class="a" style="left:826px;top:207px;width:2px;height:20px;background:#2e2e2e"></div>
<div class="a" style="left:1187px;top:207px;width:2px;height:20px;background:#2e2e2e"></div>
<div class="c" style="left:483px;width:155px;top:209px;font-size:15px;color:#000">符号</div>
<div class="c" style="left:640px;width:92px;top:209px;font-size:15px;color:#000">变量类型</div>
<div class="c" style="left:734px;width:92px;top:209px;font-size:15px;color:#000">数据类型</div>
<div class="c" style="left:828px;width:359px;top:209px;font-size:15px;color:#000">注释</div>
<div class="a" style="left:433px;top:227px;width:48px;height:18px;background:#f0f0f0;border-top:1px solid #fff;border-left:1px solid #fff"></div>
<div class="a" style="left:433px;top:245px;width:48px;height:2px;background:#2e2e2e"></div>
<div class="a" style="left:481px;top:227px;width:2px;height:20px;background:#2e2e2e"></div>
<div class="a" style="left:483px;top:227px;width:155px;height:18px;background:#fff"></div>
<div class="a" style="left:640px;top:227px;width:92px;height:18px;background:#e6e6e6"></div>
<div class="a" style="left:734px;top:227px;width:92px;height:18px;background:#fff"></div>
<div class="a" style="left:828px;top:227px;width:359px;height:18px;background:#fff"></div>
<div class="a" style="left:483px;top:245px;width:705px;height:2px;background:#a0a0a0"></div>
<div class="a" style="left:638px;top:227px;width:2px;height:20px;background:#a0a0a0"></div>
<div class="a" style="left:732px;top:227px;width:2px;height:20px;background:#a0a0a0"></div>
<div class="a" style="left:826px;top:227px;width:2px;height:20px;background:#a0a0a0"></div>
<div class="a" style="left:1187px;top:227px;width:2px;height:20px;background:#a0a0a0"></div>
<div class="t" style="left:645px;top:229px;font-size:14px;color:#000;font-weight:400;transform:scaleX(.98);transform-origin:left">TEMP</div>
<div class="a" style="left:433px;top:247px;width:48px;height:18px;background:#f0f0f0;border-top:1px solid #fff;border-left:1px solid #fff"></div>
<div class="a" style="left:433px;top:265px;width:48px;height:2px;background:#2e2e2e"></div>
<div class="a" style="left:481px;top:247px;width:2px;height:20px;background:#2e2e2e"></div>
<div class="a" style="left:483px;top:247px;width:155px;height:18px;background:#fff"></div>
<div class="a" style="left:640px;top:247px;width:92px;height:18px;background:#e6e6e6"></div>
<div class="a" style="left:734px;top:247px;width:92px;height:18px;background:#fff"></div>
<div class="a" style="left:828px;top:247px;width:359px;height:18px;background:#fff"></div>
<div class="a" style="left:483px;top:265px;width:705px;height:2px;background:#a0a0a0"></div>
<div class="a" style="left:638px;top:247px;width:2px;height:20px;background:#a0a0a0"></div>
<div class="a" style="left:732px;top:247px;width:2px;height:20px;background:#a0a0a0"></div>
<div class="a" style="left:826px;top:247px;width:2px;height:20px;background:#a0a0a0"></div>
<div class="a" style="left:1187px;top:247px;width:2px;height:20px;background:#a0a0a0"></div>
<div class="t" style="left:645px;top:249px;font-size:14px;color:#000;font-weight:400;transform:scaleX(.98);transform-origin:left">TEMP</div>
<div class="a" style="left:433px;top:267px;width:48px;height:18px;background:#f0f0f0;border-top:1px solid #fff;border-left:1px solid #fff"></div>
<div class="a" style="left:433px;top:285px;width:48px;height:2px;background:#2e2e2e"></div>
<div class="a" style="left:481px;top:267px;width:2px;height:20px;background:#2e2e2e"></div>
<div class="a" style="left:483px;top:267px;width:155px;height:18px;background:#fff"></div>
<div class="a" style="left:640px;top:267px;width:92px;height:18px;background:#e6e6e6"></div>
<div class="a" style="left:734px;top:267px;width:92px;height:18px;background:#fff"></div>
<div class="a" style="left:828px;top:267px;width:359px;height:18px;background:#fff"></div>
<div class="a" style="left:483px;top:285px;width:705px;height:2px;background:#a0a0a0"></div>
<div class="a" style="left:638px;top:267px;width:2px;height:20px;background:#a0a0a0"></div>
<div class="a" style="left:732px;top:267px;width:2px;height:20px;background:#a0a0a0"></div>
<div class="a" style="left:826px;top:267px;width:2px;height:20px;background:#a0a0a0"></div>
<div class="a" style="left:1187px;top:267px;width:2px;height:20px;background:#a0a0a0"></div>
<div class="t" style="left:645px;top:269px;font-size:14px;color:#000;font-weight:400;transform:scaleX(.98);transform-origin:left">TEMP</div>
<div class="a" style="left:433px;top:287px;width:48px;height:18px;background:#f0f0f0;border-top:1px solid #fff;border-left:1px solid #fff"></div>
<div class="a" style="left:433px;top:305px;width:48px;height:2px;background:#2e2e2e"></div>
<div class="a" style="left:481px;top:287px;width:2px;height:20px;background:#2e2e2e"></div>
<div class="a" style="left:483px;top:287px;width:155px;height:18px;background:#fff"></div>
<div class="a" style="left:640px;top:287px;width:92px;height:18px;background:#e6e6e6"></div>
<div class="a" style="left:734px;top:287px;width:92px;height:18px;background:#fff"></div>
<div class="a" style="left:828px;top:287px;width:359px;height:18px;background:#fff"></div>
<div class="a" style="left:483px;top:305px;width:705px;height:2px;background:#a0a0a0"></div>
<div class="a" style="left:638px;top:287px;width:2px;height:20px;background:#a0a0a0"></div>
<div class="a" style="left:732px;top:287px;width:2px;height:20px;background:#a0a0a0"></div>
<div class="a" style="left:826px;top:287px;width:2px;height:20px;background:#a0a0a0"></div>
<div class="a" style="left:1187px;top:287px;width:2px;height:20px;background:#a0a0a0"></div>
<div class="t" style="left:645px;top:289px;font-size:14px;color:#000;font-weight:400;transform:scaleX(.98);transform-origin:left">TEMP</div>
<div class="a" style="left:405px;top:332px;width:2140px;height:7px;background:#f0f0f0;border-top:1px solid #fff"></div>
<div class="a" style="left:405px;top:339px;width:2140px;height:935px;background:#fff;border-top:2px solid #6e6e6e;border-left:2px solid #7a7a7a"></div>
<div class="a chk" style="left:407px;top:341px;width:24px;height:909px;"></div>
<div class="a" style="left:431px;top:341px;width:2px;height:909px;background:#000"></div>
<div class="a" style="left:440px;top:346px;width:750px;height:21px;background:#e1e1e1;border:1px solid #999"></div>
<div class="t" style="left:446px;top:349px;font-size:15px;color:#109010;font-weight:400;">程序注释</div>
<div class="t" style="left:440px;top:375px;font-size:15px;color:#000;font-weight:400;"><b>网络</b></div>
<div class="t" style="left:478px;top:376px;font-size:16px;color:#000;font-weight:700;">1</div>
<div class="t" style="left:516px;top:375px;font-size:15px;color:#109010;font-weight:400;">网络标题</div>
<div class="a" style="left:440px;top:397px;width:750px;height:21px;background:#e1e1e1;border:1px solid #999"></div>
<div class="t" style="left:446px;top:400px;font-size:15px;color:#109010;font-weight:400;">网络注释</div>
<div class="a" style="left:433px;top:458px;width:63px;height:2px;background:#000"></div>
<div class="a" style="left:495px;top:445px;width:2px;height:27px;background:#000"></div>
<svg class="a" style="left:482px;top:446px" width="14" height="26" viewBox="0 0 14 26"><path d="M1.5 1.5L12.5 13L1.5 24.5" fill="none" stroke="#000" stroke-width="2"/></svg>
<div class="t" style="left:440px;top:535px;font-size:15px;color:#000;font-weight:400;"><b>网络</b></div>
<div class="t" style="left:478px;top:536px;font-size:16px;color:#000;font-weight:700;">2</div>
<div class="a" style="left:440px;top:556px;width:750px;height:21px;background:#e1e1e1;border:1px solid #999"></div>
<div class="a" style="left:433px;top:618px;width:63px;height:2px;background:#000"></div>
<div class="a" style="left:495px;top:605px;width:2px;height:27px;background:#000"></div>
<svg class="a" style="left:482px;top:606px" width="14" height="26" viewBox="0 0 14 26"><path d="M1.5 1.5L12.5 13L1.5 24.5" fill="none" stroke="#000" stroke-width="2"/></svg>
<div class="t" style="left:440px;top:695px;font-size:15px;color:#000;font-weight:400;"><b>网络</b></div>
<div class="t" style="left:478px;top:696px;font-size:16px;color:#000;font-weight:700;">3</div>
<div class="a" style="left:440px;top:716px;width:750px;height:21px;background:#e1e1e1;border:1px solid #999"></div>
<div class="a" style="left:433px;top:778px;width:63px;height:2px;background:#000"></div>
<div class="a" style="left:495px;top:765px;width:2px;height:27px;background:#000"></div>
<svg class="a" style="left:482px;top:766px" width="14" height="26" viewBox="0 0 14 26"><path d="M1.5 1.5L12.5 13L1.5 24.5" fill="none" stroke="#000" stroke-width="2"/></svg>
<div class="t" style="left:440px;top:855px;font-size:15px;color:#000;font-weight:400;"><b>网络</b></div>
<div class="t" style="left:478px;top:856px;font-size:16px;color:#000;font-weight:700;">4</div>
<div class="a" style="left:440px;top:876px;width:750px;height:21px;background:#e1e1e1;border:1px solid #999"></div>
<div class="a" style="left:433px;top:938px;width:63px;height:2px;background:#000"></div>
<div class="a" style="left:495px;top:925px;width:2px;height:27px;background:#000"></div>
<svg class="a" style="left:482px;top:926px" width="14" height="26" viewBox="0 0 14 26"><path d="M1.5 1.5L12.5 13L1.5 24.5" fill="none" stroke="#000" stroke-width="2"/></svg>
<div class="t" style="left:440px;top:1015px;font-size:15px;color:#000;font-weight:400;"><b>网络</b></div>
<div class="t" style="left:478px;top:1016px;font-size:16px;color:#000;font-weight:700;">5</div>
<div class="a" style="left:440px;top:1036px;width:750px;height:21px;background:#e1e1e1;border:1px solid #999"></div>
<div class="a" style="left:433px;top:1098px;width:63px;height:2px;background:#000"></div>
<div class="a" style="left:495px;top:1085px;width:2px;height:27px;background:#000"></div>
<svg class="a" style="left:482px;top:1086px" width="14" height="26" viewBox="0 0 14 26"><path d="M1.5 1.5L12.5 13L1.5 24.5" fill="none" stroke="#000" stroke-width="2"/></svg>
<div class="t" style="left:440px;top:1175px;font-size:15px;color:#000;font-weight:400;"><b>网络</b></div>
<div class="t" style="left:478px;top:1176px;font-size:16px;color:#000;font-weight:700;">6</div>
<div class="a" style="left:440px;top:1196px;width:750px;height:21px;background:#e1e1e1;border:1px solid #999"></div>
<div class="a" style="left:433px;top:1258px;width:63px;height:2px;background:#000"></div>
<div class="a" style="left:495px;top:1245px;width:2px;height:27px;background:#000"></div>
<svg class="a" style="left:482px;top:1246px" width="14" height="26" viewBox="0 0 14 26"><path d="M1.5 1.5L12.5 13L1.5 24.5" fill="none" stroke="#000" stroke-width="2"/></svg>
<div class="a chkl" style="left:2521px;top:340px;width:21px;height:910px;"></div>
<div class="a" style="left:2521px;top:340px;width:21px;height:21px;background:#f0f0f0;border-top:1px solid #fff;border-left:1px solid #fff;box-shadow:inset -1px -1px 0 #a0a0a0;border-right:1px solid #6e6e6e;border-bottom:1px solid #6e6e6e"></div>
<svg class="a" style="left:2526px;top:345px" width="11" height="11" viewBox="0 0 11 11"><path d="M1 8h9L5.5 3z" fill="#000"/></svg>
<div class="a" style="left:2521px;top:361px;width:21px;height:160px;background:#f0f0f0;border-top:1px solid #fff;border-left:1px solid #fff;box-shadow:inset -1px -1px 0 #a0a0a0;border-right:1px solid #6e6e6e;border-bottom:1px solid #6e6e6e"></div>
<div class="a" style="left:2521px;top:1230px;width:21px;height:21px;background:#f0f0f0;border-top:1px solid #fff;border-left:1px solid #fff;box-shadow:inset -1px -1px 0 #a0a0a0;border-right:1px solid #6e6e6e;border-bottom:1px solid #6e6e6e"></div>
<svg class="a" style="left:2526px;top:1235px" width="11" height="11" viewBox="0 0 11 11"><path d="M1 3h9L5.5 8z" fill="#000"/></svg>
<div class="a" style="left:407px;top:1250px;width:2138px;height:22px;background:#f0f0f0"></div>
<div class="a chkl" style="left:1502px;top:1250px;width:1043px;height:22px;"></div>
<div class="a" style="left:407px;top:1250px;width:21px;height:21px;background:#f0f0f0;border-top:1px solid #fff;border-left:1px solid #fff;box-shadow:inset -1px -1px 0 #a0a0a0;border-right:1px solid #6e6e6e;border-bottom:1px solid #6e6e6e"></div>
<div class="a" style="left:428px;top:1250px;width:21px;height:21px;background:#f0f0f0;border-top:1px solid #fff;border-left:1px solid #fff;box-shadow:inset -1px -1px 0 #a0a0a0;border-right:1px solid #6e6e6e;border-bottom:1px solid #6e6e6e"></div>
<div class="a" style="left:449px;top:1250px;width:21px;height:21px;background:#f0f0f0;border-top:1px solid #fff;border-left:1px solid #fff;box-shadow:inset -1px -1px 0 #a0a0a0;border-right:1px solid #6e6e6e;border-bottom:1px solid #6e6e6e"></div>
<div class="a" style="left:470px;top:1250px;width:21px;height:21px;background:#f0f0f0;border-top:1px solid #fff;border-left:1px solid #fff;box-shadow:inset -1px -1px 0 #a0a0a0;border-right:1px solid #6e6e6e;border-bottom:1px solid #6e6e6e"></div>
<svg class="a" style="left:410px;top:1253px" width="14" height="14" viewBox="0 0 14 14"><path d="M3 3v8" stroke="#000" stroke-width="1.5"/><path d="M11 3v8L5 7z" fill="#000"/></svg>
<svg class="a" style="left:431px;top:1253px" width="14" height="14" viewBox="0 0 14 14"><path d="M9 3v8L4 7z" fill="#000"/></svg>
<svg class="a" style="left:452px;top:1253px" width="14" height="14" viewBox="0 0 14 14"><path d="M5 3v8L10 7z" fill="#000"/></svg>
<svg class="a" style="left:473px;top:1253px" width="14" height="14" viewBox="0 0 14 14"><path d="M10 3v8" stroke="#000" stroke-width="1.5"/><path d="M3 3v8L9 7z" fill="#000"/></svg>
<div class="a" style="left:694px;top:1250px;width:783px;height:21px;background:#c8c8c8;border-top:2px solid #1e1e1e;border-right:2px solid #1e1e1e"></div>
<div class="a" style="left:566px;top:1250px;width:130px;height:2px;background:#1e1e1e"></div>
<svg class="a" style="left:485px;top:1246px" width="215" height="27" viewBox="0 0 215 27"><path d="M6 4H8.6L17 25H6z" fill="#c8c8c8"/><path d="M8.6 4L17 25H75L82 4z" fill="#fff"/><path d="M82 5H149L140 25H84L78 15z" fill="#f0f0f0"/><path d="M149 5H209L201 25H150L143 15z" fill="#f0f0f0"/><path d="M75 25L78 15L84 25z" fill="#c8c8c8"/><path d="M140 25L143 15L150 25z" fill="#c8c8c8"/><path d="M201 25L209 5V25z" fill="#c8c8c8"/><path d="M8.6 4L17 25M75 25L82 4.5M78 15L84 25M140 25L149 4.5M143 15L150 25M201 25L209 4.5" fill="none" stroke="#000" stroke-width="1.8"/><path d="M84 25H140M150 25H201" stroke="#fff" stroke-width="1"/></svg>
<div class="t" style="left:505px;top:1255px;font-size:16px;color:#000;font-weight:400;"><b>主程序</b></div>
<div class="t" style="left:576px;top:1256px;font-size:14px;color:#000;font-weight:400;transform:scaleX(.95);transform-origin:left">SBR_0</div>
<div class="t" style="left:642px;top:1256px;font-size:14px;color:#000;font-weight:400;transform:scaleX(.97);transform-origin:left">INT_0</div>
<div class="a" style="left:1480px;top:1250px;width:21px;height:21px;background:#f0f0f0;border-top:1px solid #fff;border-left:1px solid #fff;box-shadow:inset -1px -1px 0 #a0a0a0;border-right:1px solid #6e6e6e;border-bottom:1px solid #6e6e6e"></div>
<svg class="a" style="left:1485px;top:1255px" width="11" height="11" viewBox="0 0 11 11"><path d="M8 1v9L3 5.5z" fill="#000"/></svg>
<div class="a" style="left:1502px;top:1250px;width:522px;height:21px;background:#f0f0f0;border-top:1px solid #fff;border-left:1px solid #fff;box-shadow:inset -1px -1px 0 #a0a0a0;border-right:1px solid #6e6e6e;border-bottom:1px solid #6e6e6e"></div>
<div class="a" style="left:2501px;top:1251px;width:21px;height:21px;background:#f0f0f0;border-top:1px solid #fff;border-left:1px solid #fff;box-shadow:inset -1px -1px 0 #a0a0a0;border-right:1px solid #6e6e6e;border-bottom:1px solid #6e6e6e"></div>
<svg class="a" style="left:2506px;top:1256px" width="11" height="11" viewBox="0 0 11 11"><path d="M3 1v9L8 5.5z" fill="#000"/></svg>
<div class="a" style="left:2522px;top:1251px;width:23px;height:21px;background:#f0f0f0"></div>
<svg class="a" style="left:2527px;top:1256px" width="17" height="16" viewBox="0 0 17 16"><path d="M2 15L15 2M8 15L15 8M14 14h1" stroke="#999" stroke-width="1.5"/></svg>
<div class="a" style="left:642px;top:321px;width:537px;height:543px;border-radius:8px;background:#f0f0f0;box-shadow:0 22px 64px rgba(0,0,0,.42),0 0 16px rgba(0,0,0,.16);border:1px solid #c8c8c8;overflow:hidden"><div class="a" style="left:0;top:0;width:536px;height:38px;background:#eef2f9"></div></div>
<div class="t" style="left:653px;top:333px;font-size:15px;color:#1a1a1a;font-weight:400;transform:scaleX(.977);transform-origin:left">Help Topics: STEP 7 - Micro/WIN 帮助窗口</div>
<div class="t" style="left:1086px;top:331px;font-size:16px;color:#222;font-weight:400;">?</div>
<svg class="a" style="left:1140px;top:332px" width="16" height="16" viewBox="0 0 16 16"><path d="M1.5 1.5L14.5 14.5M14.5 1.5L1.5 14.5" stroke="#222" stroke-width="1.4"/></svg>
<div class="a" style="left:652px;top:393px;width:519px;height:426px;border-top:1px solid #fff;border-left:1px solid #fff;border-right:2px solid #6e6e6e;border-bottom:2px solid #6e6e6e;box-shadow:inset -1px -1px 0 #a0a0a0"></div>
<div class="a" style="left:652px;top:368px;width:71px;height:27px;background:#f0f0f0;border-top:1px solid #fff;border-left:1px solid #fff;border-right:2px solid #6e6e6e;border-radius:2px 2px 0 0"></div>
<div class="a" style="left:723px;top:371px;width:50px;height:23px;background:#f0f0f0;border-top:1px solid #fff;border-right:2px solid #6e6e6e;border-radius:0 2px 0 0"></div>
<div class="a" style="left:653px;top:393px;width:69px;height:2px;background:#f0f0f0"></div>
<div class="t" style="left:660px;top:373px;font-size:14px;color:#000;font-weight:400;transform:scaleX(.93);transform-origin:left">Contents</div>
<div class="t" style="left:729px;top:375px;font-size:14px;color:#000;font-weight:400;transform:scaleX(.91);transform-origin:left">Index</div>
<div class="t" style="left:673px;top:424px;font-size:14px;color:#000;font-weight:400;transform:scaleX(.958);transform-origin:left">Click a topic, and then click Display. Or click another tab, such as Index.</div>
<div class="a" style="left:673px;top:454px;width:472px;height:344px;background:#fff;border-top:2px solid #808080;border-left:2px solid #808080;border-right:1px solid #e8e8e8;border-bottom:1px solid #e8e8e8;box-shadow:inset 1px 1px 0 #6a6a6a"></div>
<svg class="a" style="left:679px;top:458px" width="16" height="19" viewBox="0 0 16 19"><path d="M1.5 1.5h11l1.5 1.5v14h-12.5z" fill="#ffffa0" stroke="#000"/><path d="M13.5 3v14.5h-11" fill="none" stroke="#000" stroke-width="1.5"/><text x="7.5" y="13.5" font-size="13" font-weight="bold" fill="#0000e0" text-anchor="middle" font-family="Liberation Sans">?</text></svg>
<div class="a" style="left:704px;top:457px;width:46px;height:22px;background:#0078d7"></div>
<div class="t" style="left:707px;top:461px;font-size:13px;color:#fff;font-weight:400;font-family:'Liberation Mono',monospace">新特性</div>
<svg class="a" style="left:679px;top:480px" width="16" height="19" viewBox="0 0 16 19"><path d="M1.5 1.5h11l1.5 1.5v14h-12.5z" fill="#ffffa0" stroke="#000"/><path d="M13.5 3v14.5h-11" fill="none" stroke="#000" stroke-width="1.5"/><text x="7.5" y="13.5" font-size="13" font-weight="bold" fill="#0000e0" text-anchor="middle" font-family="Liberation Sans">?</text></svg>
<div class="t" style="left:707px;top:484px;font-size:13px;color:#000;font-weight:400;font-family:'Liberation Mono',monospace">快速参考手册</div>
<svg class="a" style="left:680px;top:503px" width="21" height="19" viewBox="0 0 21 19"><path d="M1 8L11 1L20 8L10 16z" fill="#800080" stroke="#000" stroke-width="1"/><path d="M1 8v3l9 7 10-8v-2" fill="#800080" stroke="#000" stroke-width="1"/><path d="M10 15.5L19 9" stroke="#fff" stroke-width="1.6"/><path d="M1 8l9 8" stroke="#000" stroke-width="1"/></svg>
<div class="t" style="left:707px;top:506px;font-size:13px;color:#000;font-weight:400;font-family:'Liberation Mono',monospace">入门指南</div>
<svg class="a" style="left:680px;top:526px" width="21" height="19" viewBox="0 0 21 19"><path d="M1 8L11 1L20 8L10 16z" fill="#800080" stroke="#000" stroke-width="1"/><path d="M1 8v3l9 7 10-8v-2" fill="#800080" stroke="#000" stroke-width="1"/><path d="M10 15.5L19 9" stroke="#fff" stroke-width="1.6"/><path d="M1 8l9 8" stroke="#000" stroke-width="1"/></svg>
<div class="t" style="left:707px;top:528px;font-size:13px;color:#000;font-weight:400;font-family:'Liberation Mono',monospace">设置通信</div>
<svg class="a" style="left:680px;top:548px" width="21" height="19" viewBox="0 0 21 19"><path d="M1 8L11 1L20 8L10 16z" fill="#800080" stroke="#000" stroke-width="1"/><path d="M1 8v3l9 7 10-8v-2" fill="#800080" stroke="#000" stroke-width="1"/><path d="M10 15.5L19 9" stroke="#fff" stroke-width="1.6"/><path d="M1 8l9 8" stroke="#000" stroke-width="1"/></svg>
<div class="t" style="left:707px;top:551px;font-size:13px;color:#000;font-weight:400;font-family:'Liberation Mono',monospace">PLC 操作和选项</div>
<svg class="a" style="left:680px;top:570px" width="21" height="19" viewBox="0 0 21 19"><path d="M1 8L11 1L20 8L10 16z" fill="#800080" stroke="#000" stroke-width="1"/><path d="M1 8v3l9 7 10-8v-2" fill="#800080" stroke="#000" stroke-width="1"/><path d="M10 15.5L19 9" stroke="#fff" stroke-width="1.6"/><path d="M1 8l9 8" stroke="#000" stroke-width="1"/></svg>
<div class="t" style="left:707px;top:574px;font-size:13px;color:#000;font-weight:400;font-family:'Liberation Mono',monospace">LAD、FBD 和 STL 程序编辑器</div>
<svg class="a" style="left:680px;top:593px" width="21" height="19" viewBox="0 0 21 19"><path d="M1 8L11 1L20 8L10 16z" fill="#800080" stroke="#000" stroke-width="1"/><path d="M1 8v3l9 7 10-8v-2" fill="#800080" stroke="#000" stroke-width="1"/><path d="M10 15.5L19 9" stroke="#fff" stroke-width="1.6"/><path d="M1 8l9 8" stroke="#000" stroke-width="1"/></svg>
<div class="t" style="left:707px;top:596px;font-size:13px;color:#000;font-weight:400;font-family:'Liberation Mono',monospace">LAD、STL 和 FBD 指令集</div>
<svg class="a" style="left:680px;top:616px" width="21" height="19" viewBox="0 0 21 19"><path d="M1 8L11 1L20 8L10 16z" fill="#800080" stroke="#000" stroke-width="1"/><path d="M1 8v3l9 7 10-8v-2" fill="#800080" stroke="#000" stroke-width="1"/><path d="M10 15.5L19 9" stroke="#fff" stroke-width="1.6"/><path d="M1 8l9 8" stroke="#000" stroke-width="1"/></svg>
<div class="t" style="left:707px;top:618px;font-size:13px;color:#000;font-weight:400;font-family:'Liberation Mono',monospace">如何使用 PLC 存储区</div>
<svg class="a" style="left:680px;top:638px" width="21" height="19" viewBox="0 0 21 19"><path d="M1 8L11 1L20 8L10 16z" fill="#800080" stroke="#000" stroke-width="1"/><path d="M1 8v3l9 7 10-8v-2" fill="#800080" stroke="#000" stroke-width="1"/><path d="M10 15.5L19 9" stroke="#fff" stroke-width="1.6"/><path d="M1 8l9 8" stroke="#000" stroke-width="1"/></svg>
<div class="t" style="left:707px;top:641px;font-size:13px;color:#000;font-weight:400;font-family:'Liberation Mono',monospace">SM 特殊存储区赋值和功能</div>
<svg class="a" style="left:680px;top:660px" width="21" height="19" viewBox="0 0 21 19"><path d="M1 8L11 1L20 8L10 16z" fill="#800080" stroke="#000" stroke-width="1"/><path d="M1 8v3l9 7 10-8v-2" fill="#800080" stroke="#000" stroke-width="1"/><path d="M10 15.5L19 9" stroke="#fff" stroke-width="1.6"/><path d="M1 8l9 8" stroke="#000" stroke-width="1"/></svg>
<div class="t" style="left:707px;top:664px;font-size:13px;color:#000;font-weight:400;font-family:'Liberation Mono',monospace">如何执行常见任务</div>
<svg class="a" style="left:680px;top:683px" width="21" height="19" viewBox="0 0 21 19"><path d="M1 8L11 1L20 8L10 16z" fill="#800080" stroke="#000" stroke-width="1"/><path d="M1 8v3l9 7 10-8v-2" fill="#800080" stroke="#000" stroke-width="1"/><path d="M10 15.5L19 9" stroke="#fff" stroke-width="1.6"/><path d="M1 8l9 8" stroke="#000" stroke-width="1"/></svg>
<div class="t" style="left:707px;top:686px;font-size:13px;color:#000;font-weight:400;font-family:'Liberation Mono',monospace">应用程序用户参考手册</div>
<svg class="a" style="left:680px;top:706px" width="21" height="19" viewBox="0 0 21 19"><path d="M1 8L11 1L20 8L10 16z" fill="#800080" stroke="#000" stroke-width="1"/><path d="M1 8v3l9 7 10-8v-2" fill="#800080" stroke="#000" stroke-width="1"/><path d="M10 15.5L19 9" stroke="#fff" stroke-width="1.6"/><path d="M1 8l9 8" stroke="#000" stroke-width="1"/></svg>
<div class="t" style="left:707px;top:708px;font-size:13px;color:#000;font-weight:400;font-family:'Liberation Mono',monospace">错误讯息</div>
<svg class="a" style="left:680px;top:728px" width="21" height="19" viewBox="0 0 21 19"><path d="M1 8L11 1L20 8L10 16z" fill="#800080" stroke="#000" stroke-width="1"/><path d="M1 8v3l9 7 10-8v-2" fill="#800080" stroke="#000" stroke-width="1"/><path d="M10 15.5L19 9" stroke="#fff" stroke-width="1.6"/><path d="M1 8l9 8" stroke="#000" stroke-width="1"/></svg>
<div class="t" style="left:707px;top:731px;font-size:13px;color:#000;font-weight:400;font-family:'Liberation Mono',monospace">库</div>
<div class="a" style="left:874px;top:827px;width:94px;height:29px;background:#f0f0f0;border:1px solid #333;box-shadow:inset 1px 1px 0 #fff,inset -2px -2px 0 #6a6a6a"></div>
<div class="c" style="left:874px;width:94px;top:834px;font-size:14px;color:#000;transform:scaleX(0.915)">Display</div>
<div class="a" style="left:976px;top:827px;width:94px;height:29px;background:#f0f0f0;border-top:1px solid #fff;border-left:1px solid #fff;border-right:2px solid #6a6a6a;border-bottom:2px solid #6a6a6a;box-shadow:inset -1px -1px 0 #a0a0a0"></div>
<div class="c" style="left:976px;width:94px;top:834px;font-size:14px;color:#000;transform:scaleX(0.89)">Print...</div>
<div class="a" style="left:1077px;top:827px;width:94px;height:29px;background:#f0f0f0;border-top:1px solid #fff;border-left:1px solid #fff;border-right:2px solid #6a6a6a;border-bottom:2px solid #6a6a6a;box-shadow:inset -1px -1px 0 #a0a0a0"></div>
<div class="c" style="left:1077px;width:94px;top:834px;font-size:14px;color:#000;transform:scaleX(0.94)">Cancel</div>
<div class="a" style="left:2251px;top:1359px;width:132px;height:21px;border-top:1px solid #a0a0a0;border-left:1px solid #a0a0a0"></div>
<div class="a" style="left:2386px;top:1359px;width:132px;height:21px;border-top:1px solid #a0a0a0;border-left:1px solid #a0a0a0"></div>
<div class="a" style="left:2521px;top:1359px;width:39px;height:21px;border-top:1px solid #a0a0a0;border-left:1px solid #a0a0a0"></div>
<div class="t" style="left:2254px;top:1362px;font-size:15px;color:#000;font-weight:400;">网络 1</div>
<div class="t" style="left:2388px;top:1362px;font-size:15px;color:#000;font-weight:400;transform:scaleX(.93);transform-origin:left">行 1, 列 1</div>
<div class="t" style="left:2524px;top:1363px;font-size:15px;color:#000;font-weight:400;transform:scaleX(.92);transform-origin:left">INS</div>
<svg class="a" style="left:2492px;top:565px" width="66" height="66" viewBox="0 0 66 66"><defs><radialGradient id="tg" cx="50%" cy="35%" r="60%"><stop offset="0" stop-color="#e03030"/><stop offset="1" stop-color="#a00000"/></radialGradient></defs><circle cx="32.5" cy="32" r="31" fill="#b80d0d"/><circle cx="32.5" cy="32" r="27" fill="url(#tg)" stroke="#d84040" stroke-width="1"/><text x="32.5" y="26" font-size="12" font-weight="bold" fill="#fff" text-anchor="middle" font-family="Liberation Sans">Tube</text><rect x="19" y="28" width="28" height="19" rx="4" fill="#fff"/><text x="33" y="43" font-size="14" font-weight="bold" fill="#b00" text-anchor="middle" font-family="Liberation Sans">Get</text></svg>
<div class="a" style="left:4px;top:58px;width:2px;height:34px;background:#fff"></div>
<div class="a" style="left:6px;top:58px;width:1px;height:34px;background:#a8a8a8"></div>
<div class="a" style="left:4px;top:91px;width:3px;height:1px;background:#a8a8a8"></div>
<div class="a" style="left:9px;top:58px;width:2px;height:34px;background:#fff"></div>
<div class="a" style="left:11px;top:58px;width:1px;height:34px;background:#a8a8a8"></div>
<div class="a" style="left:9px;top:91px;width:3px;height:1px;background:#a8a8a8"></div>
<svg class="a" style="left:17px;top:64px" width="21" height="22" viewBox="0 0 21 22"><path d="M4.75 1.75h7l4 4v13.5h-11z" fill="#fff" stroke="#000" stroke-width="1.5"/><path d="M11.5 1.5v4.5h4.5" fill="none" stroke="#000" stroke-width="1"/><path d="M0 5h8M4 1v8M1 2l6 6M7 2l-6 6" stroke="#f0f000" stroke-width="1.2"/><circle cx="4" cy="5" r="2" fill="#f0f040"/></svg>
<svg class="a" style="left:46px;top:64px" width="22" height="20" viewBox="0 0 22 20"><path d="M1.5 7.5h6l1 2h7v9h-14z" fill="#c8c040" stroke="#000" stroke-width="1.5"/><path d="M1.5 18.5l4-7h15l-4 7z" fill="#908820" stroke="#000" stroke-width="1.5"/><path d="M9 5q4-5 9-1" fill="none" stroke="#000" stroke-width="1.5"/><path d="M18 1l2 5-5 0z" fill="#000"/></svg>
<svg class="a" style="left:75px;top:64px" width="20" height="20" viewBox="0 0 20 20"><rect x="6" y="1" width="13" height="13" fill="#808000" stroke="#000" stroke-width="1.5"/><rect x="3.5" y="3.5" width="13" height="13" fill="#808000" stroke="#000" stroke-width="1.5"/><rect x="1" y="6" width="13" height="13" rx="1" fill="#808000" stroke="#000" stroke-width="1.5"/><rect x="4" y="7.5" width="7" height="5" fill="#fff"/><rect x="4.5" y="15" width="5" height="4" fill="#000"/><rect x="10" y="15" width="1.5" height="3" fill="#fff"/></svg>
<div class="a" style="left:105px;top:60px;width:2px;height:29px;background:#a8a8a8;border-right:1px solid #fff"></div>
<svg class="a" style="left:113px;top:64px" width="22" height="20" viewBox="0 0 22 20"><path d="M5 2.5h11v6h-11z" fill="#fff" stroke="#000" stroke-width="1.5"/><rect x="1.5" y="8.5" width="19" height="8" rx="2" fill="#c8c8c8" stroke="#000" stroke-width="1.5"/><rect x="9" y="11" width="5" height="1.5" fill="#00f"/><rect x="3" y="16" width="16" height="2.5" fill="#666" stroke="#000"/></svg>
<svg class="a" style="left:142px;top:64px" width="22" height="21" viewBox="0 0 22 21"><path d="M1.5 1.5h9l4 4v14h-13z" fill="#fff" stroke="#000" stroke-width="1.5"/><circle cx="12" cy="13" r="4.2" fill="#fff" stroke="#000" stroke-width="1.6"/><path d="M15 16l5 5" stroke="#000" stroke-width="2.5"/></svg>
<div class="a" style="left:173px;top:60px;width:2px;height:29px;background:#a8a8a8;border-right:1px solid #fff"></div>
<svg class="a" style="left:185px;top:64px" width="14" height="20" viewBox="0 0 14 20"><path d="M4 1l5 12M10 1l-5 12" stroke="#a8a8a8" stroke-width="1.5"/><circle cx="4" cy="16" r="2.7" fill="none" stroke="#a8a8a8" stroke-width="1.5"/><circle cx="10" cy="16" r="2.7" fill="none" stroke="#a8a8a8" stroke-width="1.5"/></svg>
<svg class="a" style="left:211px;top:64px" width="20" height="20" viewBox="0 0 20 20"><path d="M1.5 1.5h8l2 2v11h-10z" fill="#f0f0f0" stroke="#a8a8a8"/><path d="M8.5 6.5h8l2 2v11h-10z" fill="#f0f0f0" stroke="#a8a8a8"/><path d="M3 6h5M3 9h5M10 11h7M10 14h7M10 17h7" stroke="#a8a8a8"/></svg>
<svg class="a" style="left:240px;top:64px" width="20" height="21" viewBox="0 0 20 21"><rect x="1" y="3" width="15" height="15" rx="2" fill="#a8a8a8"/><rect x="5" y="1" width="7" height="3" fill="#a8a8a8" stroke="#f0f0f0"/><rect x="9.5" y="10.5" width="9" height="9" fill="#f0f0f0" stroke="#a8a8a8"/><path d="M11 14h6M11 17h6" stroke="#a8a8a8"/></svg>
<div class="a" style="left:269px;top:60px;width:2px;height:29px;background:#a8a8a8;border-right:1px solid #fff"></div>
<svg class="a" style="left:281px;top:67px" width="16" height="14" viewBox="0 0 16 14"><path d="M4 5q6-5 10 1q2 5-3 7" fill="none" stroke="#a8a8a8" stroke-width="1.8"/><path d="M1 3l6 0-4 6z" fill="#a8a8a8"/></svg>
<div class="a" style="left:308px;top:60px;width:2px;height:29px;background:#a8a8a8;border-right:1px solid #fff"></div>
<svg class="a" style="left:316px;top:64px" width="19" height="21" viewBox="0 0 19 21"><path d="M1.5 1.5h10l3 3v15h-13z" fill="#fff" stroke="#000" stroke-width="1.5"/><path d="M4 11l3 6 10-15" fill="none" stroke="#00f" stroke-width="2.5"/></svg>
<svg class="a" style="left:344px;top:64px" width="22" height="22" viewBox="0 0 22 22"><path d="M1.5 1.5h9l3 3v12h-12z" fill="#fff" stroke="#000" stroke-width="1.5"/><path d="M5.5 5.5h10l3 3v12h-13z" fill="#fff" stroke="#000" stroke-width="1.5"/><path d="M8 13l3 6 10-15" fill="none" stroke="#00f" stroke-width="2.5"/></svg>
<div class="a" style="left:375px;top:60px;width:2px;height:29px;background:#a8a8a8;border-right:1px solid #fff"></div>
<svg class="a" style="left:386px;top:67px" width="18" height="14" viewBox="0 0 18 14"><path d="M3 8h12L9 1z" fill="#00f"/><rect x="1" y="11" width="16" height="2.5" fill="#000"/></svg>
<svg class="a" style="left:414px;top:67px" width="18" height="14" viewBox="0 0 18 14"><path d="M3 1h12L9 8z" fill="#00f"/><rect x="1" y="11" width="16" height="2.5" fill="#000"/></svg>
<div class="a" style="left:442px;top:60px;width:2px;height:29px;background:#a8a8a8;border-right:1px solid #fff"></div>
<svg class="a" style="left:454px;top:65px" width="16" height="19" viewBox="0 0 16 19"><text x="1" y="9" font-size="8" fill="#a8a8a8" font-family="Liberation Mono">A</text><text x="1" y="17" font-size="8" fill="#a8a8a8" font-family="Liberation Mono">Z</text><path d="M12 2v14M9 13l3 4 3-4" fill="none" stroke="#a8a8a8" stroke-width="1.6"/></svg>
<svg class="a" style="left:483px;top:65px" width="16" height="19" viewBox="0 0 16 19"><text x="1" y="9" font-size="8" fill="#a8a8a8" font-family="Liberation Mono">A</text><text x="1" y="17" font-size="8" fill="#a8a8a8" font-family="Liberation Mono">Z</text><path d="M12 17V3M9 6l3-4 3 4" fill="none" stroke="#a8a8a8" stroke-width="1.6"/></svg>
<div class="a" style="left:509px;top:60px;width:2px;height:29px;background:#a8a8a8;border-right:1px solid #fff"></div>
<div class="a" style="left:515px;top:60px;width:29px;height:29px;background:#f0f0f0;border-top:1px solid #fff;border-left:1px solid #fff;border-right:2px solid #b4b4b4;border-bottom:2px solid #b4b4b4"></div>
<svg class="a" style="left:519px;top:63px" width="21" height="20" viewBox="0 0 21 20"><rect x="1.5" y="1.5" width="16" height="14" fill="#fff" stroke="#000" stroke-width="1.5"/><rect x="2" y="2" width="15" height="3" fill="#000080"/><rect x="2" y="5" width="4" height="10" fill="#ee6"/><path d="M7 11q2-3 5-2l2 2h5v8h-12z" fill="#ffff80" stroke="#333"/></svg>
<div class="a" style="left:551px;top:56px;width:2px;height:37px;background:#a8a8a8"></div>
<div class="a" style="left:0px;top:92px;width:551px;height:2px;background:#a8a8a8;border-bottom:1px solid #fff"></div>
<div class="a" style="left:559px;top:58px;width:2px;height:34px;background:#fff"></div>
<div class="a" style="left:561px;top:58px;width:1px;height:34px;background:#a8a8a8"></div>
<div class="a" style="left:559px;top:91px;width:3px;height:1px;background:#a8a8a8"></div>
<div class="a" style="left:564px;top:58px;width:2px;height:34px;background:#fff"></div>
<div class="a" style="left:566px;top:58px;width:1px;height:34px;background:#a8a8a8"></div>
<div class="a" style="left:564px;top:91px;width:3px;height:1px;background:#a8a8a8"></div>
<svg class="a" style="left:576px;top:65px" width="14" height="16" viewBox="0 0 14 16"><path d="M2 1v14l10-7z" fill="#00c000" stroke="#000" stroke-width="1.3"/></svg>
<svg class="a" style="left:603px;top:67px" width="15" height="12" viewBox="0 0 15 12"><rect x="1" y="1" width="13" height="10" fill="#800000" stroke="#000" stroke-width="1"/></svg>
<div class="a" style="left:630px;top:60px;width:2px;height:29px;background:#a8a8a8;border-right:1px solid #fff"></div>
<svg class="a" style="left:638px;top:63px" width="22" height="21" viewBox="0 0 22 21"><rect x="3.5" y="1.5" width="17" height="14" fill="#fff" stroke="#000" stroke-width="1.5"/><rect x="4" y="2" width="16" height="3" fill="#000080"/><rect x="1.5" y="3" width="6" height="5" fill="#fff" stroke="#000" stroke-width="1.5"/><rect x="6.5" y="8" width="6" height="5" fill="#fff" stroke="#000" stroke-width="1.5"/><rect x="11.5" y="13" width="6" height="5" fill="#fff" stroke="#000" stroke-width="1.5"/><path d="M1 13v8l5-4z" fill="#000"/></svg>
<svg class="a" style="left:666px;top:63px" width="22" height="21" viewBox="0 0 22 21"><rect x="3.5" y="1.5" width="17" height="14" fill="#f0f0f0" stroke="#a8a8a8" stroke-width="1.5"/><rect x="1.5" y="3" width="6" height="5" fill="none" stroke="#a8a8a8" stroke-width="1.5"/><rect x="6.5" y="8" width="6" height="5" fill="none" stroke="#a8a8a8" stroke-width="1.5"/><rect x="11.5" y="13" width="6" height="5" fill="#f0f0f0" stroke="#a8a8a8" stroke-width="1.5"/><path d="M2 15v6M5 15v6" stroke="#a8a8a8" stroke-width="1.5"/></svg>
<div class="a" style="left:697px;top:60px;width:2px;height:29px;background:#a8a8a8;border-right:1px solid #fff"></div>
<svg class="a" style="left:705px;top:64px" width="23" height="20" viewBox="0 0 23 20"><rect x="2.5" y="1.5" width="19" height="15" fill="#fff" stroke="#000" stroke-width="1.5"/><rect x="3" y="2" width="18" height="3" fill="#000080"/><path d="M3 16q3-8 6-4t6-2 5-5" fill="none" stroke="#000" stroke-width="1.5"/><circle cx="4" cy="17" r="2.5" fill="#fff" stroke="#000" stroke-width="1.3"/><circle cx="10" cy="17" r="2.5" fill="#fff" stroke="#000" stroke-width="1.3"/></svg>
<svg class="a" style="left:735px;top:64px" width="22" height="20" viewBox="0 0 22 20"><rect x="1.5" y="1.5" width="19" height="17" fill="#f0f0f0" stroke="#a8a8a8" stroke-width="1.5"/><rect x="2" y="2" width="18" height="3" fill="#a8a8a8"/><path d="M3 14h4v-5h5v5h4v-5h4" fill="none" stroke="#a8a8a8" stroke-width="1.3"/></svg>
<svg class="a" style="left:763px;top:64px" width="22" height="20" viewBox="0 0 22 20"><rect x="3.5" y="1.5" width="18" height="15" fill="#f0f0f0" stroke="#a8a8a8" stroke-width="1.5"/><rect x="4" y="2" width="17" height="3" fill="#a8a8a8"/><path d="M5 15q4-8 8-3t6-4" fill="none" stroke="#a8a8a8" stroke-width="1.3"/><path d="M1 10v9M4 12v7" stroke="#a8a8a8" stroke-width="1.5"/></svg>
<div class="a" style="left:794px;top:60px;width:2px;height:29px;background:#a8a8a8;border-right:1px solid #fff"></div>
<svg class="a" style="left:801px;top:65px" width="24" height="16" viewBox="0 0 24 16"><circle cx="5" cy="11" r="3.8" fill="none" stroke="#000" stroke-width="1.8"/><circle cx="13" cy="11" r="3.8" fill="none" stroke="#000" stroke-width="1.8"/><path d="M1 10L4 3M17 10l4-6" fill="none" stroke="#000" stroke-width="1.5"/></svg>
<svg class="a" style="left:830px;top:63px" width="22" height="21" viewBox="0 0 22 21"><path d="M2 2q2-1 4 0t4 0 4 0" fill="none" stroke="#a8a8a8" stroke-width="1"/><path d="M4 6l10 10v4h-4l-9-10z" fill="#a8a8a8"/></svg>
<div class="a" style="left:861px;top:60px;width:2px;height:29px;background:#a8a8a8;border-right:1px solid #fff"></div>
<svg class="a" style="left:873px;top:62px" width="22" height="22" viewBox="0 0 22 22"><path d="M4 10V6a4 4 0 0 1 8 0v4" fill="none" stroke="#a8a8a8" stroke-width="2"/><rect x="1.5" y="10" width="13" height="10" rx="2" fill="#d8d8d8" stroke="#a8a8a8" stroke-width="1.5"/></svg>
<svg class="a" style="left:901px;top:62px" width="22" height="22" viewBox="0 0 22 22"><path d="M4 10V6a4 4 0 0 1 8 0v4" fill="none" stroke="#a8a8a8" stroke-width="2"/><rect x="1.5" y="10" width="13" height="10" rx="2" fill="#d8d8d8" stroke="#a8a8a8" stroke-width="1.5"/></svg>
<svg class="a" style="left:928px;top:62px" width="22" height="22" viewBox="0 0 22 22"><path d="M5 10V6a4 4 0 0 1 8 0" fill="none" stroke="#000" stroke-width="2"/><rect x="2" y="10" width="14" height="10" rx="2" fill="#f0f040" stroke="#000" stroke-width="1.5"/><path d="M7 13h4M9 13v5" stroke="#000" stroke-width="1.5"/><path d="M13 2h8l-4 4z" fill="#000"/></svg>
<svg class="a" style="left:955px;top:62px" width="22" height="22" viewBox="0 0 22 22"><path d="M4 10V6a4 4 0 0 1 8 0v4" fill="none" stroke="#a8a8a8" stroke-width="2"/><rect x="1.5" y="10" width="13" height="10" rx="2" fill="#d8d8d8" stroke="#a8a8a8" stroke-width="1.5"/><path d="M15 6h7l-3.5-4z" fill="#a8a8a8"/></svg>
<div class="a" style="left:988px;top:56px;width:2px;height:37px;background:#a8a8a8"></div>
<div class="a" style="left:551px;top:92px;width:438px;height:2px;background:#a8a8a8;border-bottom:1px solid #fff"></div>
<div class="a" style="left:4px;top:96px;width:2px;height:34px;background:#fff"></div>
<div class="a" style="left:6px;top:96px;width:1px;height:34px;background:#a8a8a8"></div>
<div class="a" style="left:4px;top:129px;width:3px;height:1px;background:#a8a8a8"></div>
<div class="a" style="left:9px;top:96px;width:2px;height:34px;background:#fff"></div>
<div class="a" style="left:11px;top:96px;width:1px;height:34px;background:#a8a8a8"></div>
<div class="a" style="left:9px;top:129px;width:3px;height:1px;background:#a8a8a8"></div>
<svg class="a" style="left:16px;top:104px" width="24" height="17" viewBox="0 0 24 17"><path d="M2 1v8l5-4z" fill="#000"/><path d="M1 13h3M4 9v8M8 9v8M8 13l3 0M11 9q-2 4 0 8M16 9q2 4 0 8M17 13h3" fill="none" stroke="#000" stroke-width="1.6"/></svg>
<svg class="a" style="left:45px;top:104px" width="24" height="17" viewBox="0 0 24 17"><path d="M1 1l5 5M6 1l-5 5" stroke="#f00" stroke-width="2.2"/><path d="M1 13h3M4 9v8M8 9v8M8 13l3 0M11 9q-2 4 0 8M16 9q2 4 0 8M17 13h3" fill="none" stroke="#000" stroke-width="1.6"/></svg>
<div class="a" style="left:76px;top:98px;width:2px;height:30px;background:#a8a8a8;border-right:1px solid #fff"></div>
<div class="a chkl" style="left:81px;top:99px;width:28px;height:29px;border-top:2px solid #a8a8a8;border-left:2px solid #a8a8a8;border-right:1px solid #fff;border-bottom:1px solid #fff"></div>
<div class="a chkl" style="left:110px;top:99px;width:28px;height:29px;border-top:2px solid #a8a8a8;border-left:2px solid #a8a8a8;border-right:1px solid #fff;border-bottom:1px solid #fff"></div>
<div class="a chkl" style="left:139px;top:99px;width:28px;height:29px;border-top:2px solid #a8a8a8;border-left:2px solid #a8a8a8;border-right:1px solid #fff;border-bottom:1px solid #fff"></div>
<svg class="a" style="left:85px;top:103px" width="20" height="20" viewBox="0 0 20 20"><rect x="1.5" y="1.5" width="17" height="17" fill="#f0f0f0" stroke="#999" stroke-width="1.3"/><path d="M4 5h2M7 5h2M10 5h2M4 8h2M7 8h2M4 11h2M7 11h2M4 14h2M7 14h2" stroke="#0e0" stroke-width="1.6"/><path d="M10 15l6-6" stroke="#ee0" stroke-width="3"/><path d="M16 9l1-1" stroke="#f60" stroke-width="3"/></svg>
<svg class="a" style="left:114px;top:102px" width="21" height="22" viewBox="0 0 21 22"><rect x="2.5" y="1.5" width="16" height="9" fill="#f0f0f0" stroke="#999" stroke-width="1.3"/><path d="M4 4h2M8 4h2M4 7h2M8 7h2" stroke="#0e0" stroke-width="1.6"/><path d="M11 9l6-6" stroke="#ee0" stroke-width="2.6"/><path d="M1 17h3M4 13v8M8 13v8M8 17h3M11 13q-2 4 0 8M16 13q2 4 0 8" fill="none" stroke="#000" stroke-width="1.6"/></svg>
<svg class="a" style="left:143px;top:103px" width="21" height="20" viewBox="0 0 21 20"><path d="M1 4h3M4 1v7M7 1v7M7 4h3M10 1q-2 3 0 7M15 1q2 3 0 7" fill="none" stroke="#000" stroke-width="1.6"/><rect x="1.5" y="10.5" width="18" height="8" fill="none" stroke="#000" stroke-width="1.6"/><path d="M1 14.5h19M7.5 10v9M13.5 10v9" stroke="#000" stroke-width="1.6"/></svg>
<div class="a" style="left:173px;top:98px;width:2px;height:30px;background:#a8a8a8;border-right:1px solid #fff"></div>
<svg class="a" style="left:180px;top:101px" width="22" height="23" viewBox="0 0 22 23"><path d="M1.5 21.5L16 4" stroke="#000" stroke-width="1.2"/><path d="M9 12.5L13.5 8l3.5 3.5-1.5 1.5 4 3.5-3.5 3.5-4-3.5 1.5-1.5z" fill="#0000f0" stroke="#000" stroke-width="1"/><path d="M15 17l3-3" stroke="#0000a0" stroke-width="1"/></svg>
<svg class="a" style="left:209px;top:101px" width="22" height="23" viewBox="0 0 22 23"><path d="M1.5 21.5L16 4" stroke="#000" stroke-width="1.2"/><path d="M9 12.5L13.5 8l3.5 3.5-1.5 1.5 4 3.5-3.5 3.5-4-3.5 1.5-1.5z" fill="#0000f0" stroke="#000" stroke-width="1"/><path d="M15 17l3-3" stroke="#0000a0" stroke-width="1"/><path d="M5 7q-3-6 3-6t4 4" fill="none" stroke="#1010a0" stroke-width="1.5"/><path d="M13 3v5h-5z" fill="#1010a0"/></svg>
<svg class="a" style="left:238px;top:101px" width="22" height="23" viewBox="0 0 22 23"><path d="M1.5 21.5L16 4" stroke="#000" stroke-width="1.2"/><path d="M9 12.5L13.5 8l3.5 3.5-1.5 1.5 4 3.5-3.5 3.5-4-3.5 1.5-1.5z" fill="#0000f0" stroke="#000" stroke-width="1"/><path d="M15 17l3-3" stroke="#0000a0" stroke-width="1"/><path d="M12 7q3-6-3-6t-4 4" fill="none" stroke="#1010a0" stroke-width="1.5"/><path d="M3 3v5h5z" fill="#1010a0"/></svg>
<svg class="a" style="left:267px;top:101px" width="22" height="23" viewBox="0 0 22 23"><path d="M1.5 21.5L16 4" stroke="#000" stroke-width="1.2"/><path d="M9 12.5L13.5 8l3.5 3.5-1.5 1.5 4 3.5-3.5 3.5-4-3.5 1.5-1.5z" fill="#0000f0" stroke="#000" stroke-width="1"/><path d="M15 17l3-3" stroke="#0000a0" stroke-width="1"/><path d="M2 1q5 4 9 11M12 1q-6 4-9 11" fill="none" stroke="#a00000" stroke-width="2"/></svg>
<div class="a" style="left:298px;top:98px;width:2px;height:30px;background:#a8a8a8;border-right:1px solid #fff"></div>
<svg class="a" style="left:305px;top:101px" width="23" height="22" viewBox="0 0 23 22"><rect x="1.5" y="1.5" width="20" height="8" fill="none" stroke="#000" stroke-width="1.5"/><path d="M1 5.5h21M8 1v9M15 1v9" stroke="#000" stroke-width="1.3"/><path d="M3 7h17l-8.5 7z" fill="#0000ff"/><path d="M2 18h2M4 15v6M8 15v6M8 18h2M11 15q-2 3 0 6M16 15q2 3 0 6" fill="none" stroke="#000" stroke-width="1.4"/></svg>
<svg class="a" style="left:334px;top:101px" width="26" height="22" viewBox="0 0 26 22"><text x="1" y="13" font-size="15" fill="#000" font-family="Liberation Sans" transform="scale(.82 1)" letter-spacing="-.5">sym</text><path d="M2 18q1.5-2 3 0t3 0 3 0 3 0 3 0 3 0" fill="none" stroke="#080" stroke-width="1.6"/></svg>
<div class="a" style="left:368px;top:95px;width:2px;height:36px;background:#a8a8a8"></div>
<div class="a" style="left:374px;top:97px;width:2px;height:33px;background:#fff"></div>
<div class="a" style="left:376px;top:97px;width:1px;height:33px;background:#a8a8a8"></div>
<div class="a" style="left:374px;top:129px;width:3px;height:1px;background:#a8a8a8"></div>
<div class="a" style="left:379px;top:97px;width:2px;height:33px;background:#fff"></div>
<div class="a" style="left:381px;top:97px;width:1px;height:33px;background:#a8a8a8"></div>
<div class="a" style="left:379px;top:129px;width:3px;height:1px;background:#a8a8a8"></div>
<svg class="a" style="left:389px;top:104px" width="18" height="17" viewBox="0 0 18 17"><path d="M1 2h8v10" fill="none" stroke="#a8a8a8" stroke-width="1.5"/><path d="M5 10h8l-4 5z" fill="#a8a8a8"/></svg>
<svg class="a" style="left:418px;top:104px" width="18" height="17" viewBox="0 0 18 17"><path d="M1 15h8V5" fill="none" stroke="#a8a8a8" stroke-width="1.5"/><path d="M5 7h8l-4-5z" fill="#a8a8a8"/></svg>
<svg class="a" style="left:446px;top:104px" width="18" height="17" viewBox="0 0 18 17"><path d="M3 8h14" stroke="#a8a8a8" stroke-width="1.5"/><path d="M1 8l6-5v10z" fill="#a8a8a8"/></svg>
<svg class="a" style="left:475px;top:104px" width="18" height="17" viewBox="0 0 18 17"><path d="M1 8h14" stroke="#a8a8a8" stroke-width="1.5"/><path d="M17 8l-6-5v10z" fill="#a8a8a8"/></svg>
<div class="a" style="left:503px;top:98px;width:2px;height:30px;background:#a8a8a8;border-right:1px solid #fff"></div>
<svg class="a" style="left:511px;top:105px" width="22" height="16" viewBox="0 0 22 16"><path d="M1 8h5M6 1v14M15 1v14M15 8h5" fill="none" stroke="#a8a8a8" stroke-width="1.6"/></svg>
<div class="a" style="left:537px;top:99px;width:29px;height:29px;background:#f0f0f0;border-top:1px solid #fff;border-left:1px solid #fff;border-right:2px solid #b4b4b4;border-bottom:2px solid #b4b4b4"></div>
<svg class="a" style="left:541px;top:105px" width="22" height="16" viewBox="0 0 22 16"><path d="M1 8h4M8 1q-5 7 0 14M14 1q5 7 0 14" fill="none" stroke="#a8a8a8" stroke-width="1.6"/></svg>
<svg class="a" style="left:570px;top:104px" width="18" height="19" viewBox="0 0 18 19"><path d="M1 4h5" stroke="#a8a8a8" stroke-width="1.5"/><rect x="6.5" y="1.5" width="9" height="15" fill="none" stroke="#a8a8a8" stroke-width="1.5"/></svg>
<div class="a" style="left:603px;top:95px;width:2px;height:36px;background:#a8a8a8"></div>
<svg class="a" style="left:42px;top:176px" width="42" height="42" viewBox="0 0 42 42"><g transform="translate(2 2)"><rect x="0.75" y="0.75" width="34" height="26.5" fill="#6e6e6e" stroke="#000" stroke-width="1.5"/><rect x="1.5" y="1.5" width="8" height="25" fill="#808080"/><path d="M9.5 1v26M9.5 13.5H1M9.5 5h25M9.5 22h25" stroke="#000" stroke-width="1.3"/><rect x="11" y="6" width="23" height="15" fill="#8c8c8c"/><rect x="3" y="15" width="5" height="9" rx="2" fill="#333" stroke="#ddd" stroke-width=".7"/><circle cx="4" cy="4" r=".9" fill="#2e2"/><circle cx="4" cy="8" r=".9" fill="#dd2"/><circle cx="12" cy="8" r=".9" fill="#2e2"/><circle cx="15.5" cy="8" r=".9" fill="#2e2"/><circle cx="19" cy="8" r=".9" fill="#2e2"/><circle cx="22.5" cy="8" r=".9" fill="#2e2"/><circle cx="12" cy="19" r=".9" fill="#2e2"/><circle cx="15.5" cy="19" r=".9" fill="#2e2"/><rect x="26" y="10" width="8" height="6" fill="#999" stroke="#000" stroke-width="1"/></g><g transform="translate(20 15.5)"><path d="M0.75 0.75h14l4 4v18.5h-18.5z" fill="#fff" stroke="#000" stroke-width="1.5"/><path d="M3 9.5h6M11 9.5h5M3 13.5h6M11 13.5h5M3 17.5h6M11 17.5h5" stroke="#2020ff" stroke-width="1.6"/></g></svg>
<svg class="a" style="left:44px;top:255px" width="40" height="38" viewBox="0 0 40 38"><rect x="6.5" y="3" width="30" height="28" fill="#e8e8f4" stroke="#000" stroke-width="1.5"/><rect x="7" y="3.5" width="29" height="3" fill="#0000e0"/><path d="M9 9h4M16 9h4M22 9h8M9 14h4M16 14h4M22 14h8M9 19h4M16 19h4M22 19h8M9 24h4M16 24h4M22 24h8M9 29h4M16 29h4M22 29h8" stroke="#1a1aa0" stroke-width="1.3"/><path d="M14.5 6v25M20.5 6v25" stroke="#bbb" stroke-width="1"/><rect x="2" y="22" width="8" height="4.5" fill="#1ee" stroke="#000" transform="rotate(-35 6 24)"/><rect x="10" y="28" width="8" height="4.5" fill="#2d2" stroke="#000" transform="rotate(35 14 30)"/><rect x="21" y="24" width="8" height="4.5" fill="#ee2" stroke="#000" transform="rotate(-45 25 26)"/></svg>
<svg class="a" style="left:42px;top:330px" width="42" height="44" viewBox="0 0 42 44"><g transform="translate(2 2)"><rect x="0.75" y="0.75" width="34" height="26.5" fill="#6e6e6e" stroke="#000" stroke-width="1.5"/><rect x="1.5" y="1.5" width="8" height="25" fill="#808080"/><path d="M9.5 1v26M9.5 13.5H1M9.5 5h25M9.5 22h25" stroke="#000" stroke-width="1.3"/><rect x="11" y="6" width="23" height="15" fill="#8c8c8c"/><rect x="3" y="15" width="5" height="9" rx="2" fill="#333" stroke="#ddd" stroke-width=".7"/><circle cx="4" cy="4" r=".9" fill="#2e2"/><circle cx="4" cy="8" r=".9" fill="#dd2"/><circle cx="12" cy="8" r=".9" fill="#2e2"/><circle cx="15.5" cy="8" r=".9" fill="#2e2"/><circle cx="19" cy="8" r=".9" fill="#2e2"/><circle cx="22.5" cy="8" r=".9" fill="#2e2"/><circle cx="12" cy="19" r=".9" fill="#2e2"/><circle cx="15.5" cy="19" r=".9" fill="#2e2"/><rect x="26" y="10" width="8" height="6" fill="#999" stroke="#000" stroke-width="1"/></g><g transform="translate(20 16)"><path d="M0.75 0.75h14l4 4v18.5h-18.5z" fill="#ffff90" stroke="#000" stroke-width="1.5"/><path d="M3 9.5h6M11 9.5h5M3 13.5h6M11 13.5h5M3 17.5h6M11 17.5h5" stroke="#9a9a40" stroke-width="1.6"/></g><path d="M7 31v7h10" fill="none" stroke="#000" stroke-width="1.3"/><path d="M5 32l2-4 2 4z M17 36l4 2-4 2z" fill="#000"/></svg>
<svg class="a" style="left:42px;top:408px" width="42" height="42" viewBox="0 0 42 42"><g transform="translate(2 2)"><rect x="0.75" y="0.75" width="34" height="26.5" fill="#6e6e6e" stroke="#000" stroke-width="1.5"/><rect x="1.5" y="1.5" width="8" height="25" fill="#808080"/><path d="M9.5 1v26M9.5 13.5H1M9.5 5h25M9.5 22h25" stroke="#000" stroke-width="1.3"/><rect x="11" y="6" width="23" height="15" fill="#8c8c8c"/><rect x="3" y="15" width="5" height="9" rx="2" fill="#333" stroke="#ddd" stroke-width=".7"/><circle cx="4" cy="4" r=".9" fill="#2e2"/><circle cx="4" cy="8" r=".9" fill="#dd2"/><circle cx="12" cy="8" r=".9" fill="#2e2"/><circle cx="15.5" cy="8" r=".9" fill="#2e2"/><circle cx="19" cy="8" r=".9" fill="#2e2"/><circle cx="22.5" cy="8" r=".9" fill="#2e2"/><circle cx="12" cy="19" r=".9" fill="#2e2"/><circle cx="15.5" cy="19" r=".9" fill="#2e2"/><rect x="26" y="10" width="8" height="6" fill="#999" stroke="#000" stroke-width="1"/></g><g transform="translate(20 15.5)"><path d="M0.75 0.75h14l4 4v18.5h-18.5z" fill="#fff" stroke="#000" stroke-width="1.5"/><path d="M3 9.5h6M11 9.5h5M3 13.5h6M11 13.5h5M3 17.5h6M11 17.5h5" stroke="#2020ff" stroke-width="1.6"/></g></svg>
<svg class="a" style="left:42px;top:486px" width="44" height="44" viewBox="0 0 44 44"><g transform="translate(2 2)"><rect x="0.75" y="0.75" width="34" height="26.5" fill="#6e6e6e" stroke="#000" stroke-width="1.5"/><rect x="1.5" y="1.5" width="8" height="25" fill="#808080"/><path d="M9.5 1v26M9.5 13.5H1M9.5 5h25M9.5 22h25" stroke="#000" stroke-width="1.3"/><rect x="11" y="6" width="23" height="15" fill="#8c8c8c"/><rect x="3" y="15" width="5" height="9" rx="2" fill="#333" stroke="#ddd" stroke-width=".7"/><circle cx="4" cy="4" r=".9" fill="#2e2"/><circle cx="4" cy="8" r=".9" fill="#dd2"/><circle cx="12" cy="8" r=".9" fill="#2e2"/><circle cx="15.5" cy="8" r=".9" fill="#2e2"/><circle cx="19" cy="8" r=".9" fill="#2e2"/><circle cx="22.5" cy="8" r=".9" fill="#2e2"/><circle cx="12" cy="19" r=".9" fill="#2e2"/><circle cx="15.5" cy="19" r=".9" fill="#2e2"/><rect x="26" y="10" width="8" height="6" fill="#999" stroke="#000" stroke-width="1"/></g><path d="M31 24l4-4 8 9-4 4z" fill="#f0f000" stroke="#000" stroke-width="1.2"/><path d="M33 22l8 9" stroke="#a06000" stroke-width="1"/><path d="M31 24l-4-5 8 1z" fill="#fff" stroke="#000" stroke-width="1"/><path d="M26 17l3 1-1 3z" fill="#000"/></svg>
<svg class="a" style="left:44px;top:565px" width="40" height="40" viewBox="0 0 40 40"><path d="M1.75 1.75h20l4 4v26h-24z" fill="#f4f07a" stroke="#000" stroke-width="1.5"/><path d="M10.75 5.75h20l6 6v24.5h-26z" fill="#f4f07a" stroke="#000" stroke-width="1.5"/><path d="M14 15h5M22 15h5M30 15h4M14 20h5M22 20h5M30 20h4M14 25h5M22 25h5M30 25h4M14 30h5M22 30h5M30 30h4" stroke="#c8c8c8" stroke-width="2.5"/><path d="M6 19h16" stroke="#000" stroke-width="2.5"/><path d="M3 19l6-5v10zM25 19l-6-5v10z" fill="#000"/></svg>
<svg class="a" style="left:42px;top:639px" width="45" height="45" viewBox="0 0 45 45"><rect x="0.5" y="0.5" width="43" height="43" fill="#a8a8a8" stroke="#ddd"/><path d="M43.5 0.5v43h-43" fill="none" stroke="#333" stroke-width="1.2"/><g transform="translate(3 4)"><rect x="0.75" y="0.75" width="34" height="26.5" fill="#6e6e6e" stroke="#000" stroke-width="1.5"/><rect x="1.5" y="1.5" width="8" height="25" fill="#808080"/><path d="M9.5 1v26M9.5 13.5H1M9.5 5h25M9.5 22h25" stroke="#000" stroke-width="1.3"/><rect x="11" y="6" width="23" height="15" fill="#8c8c8c"/><rect x="3" y="15" width="5" height="9" rx="2" fill="#333" stroke="#ddd" stroke-width=".7"/><circle cx="4" cy="4" r=".9" fill="#2e2"/><circle cx="4" cy="8" r=".9" fill="#dd2"/><circle cx="12" cy="8" r=".9" fill="#2e2"/><circle cx="15.5" cy="8" r=".9" fill="#2e2"/><circle cx="19" cy="8" r=".9" fill="#2e2"/><circle cx="22.5" cy="8" r=".9" fill="#2e2"/><circle cx="12" cy="19" r=".9" fill="#2e2"/><circle cx="15.5" cy="19" r=".9" fill="#2e2"/><rect x="26" y="10" width="8" height="6" fill="#999" stroke="#000" stroke-width="1"/></g><rect x="21" y="20" width="15" height="12" rx="1" fill="#d8d8d8" stroke="#000" stroke-width="1.2"/><rect x="24" y="23" width="9" height="6" fill="#108080"/><rect x="17" y="32" width="22" height="6" rx="1" fill="#d8d8d8" stroke="#000" stroke-width="1.2"/><rect x="20" y="34" width="2" height="2" fill="#00f"/><path d="M2 30h6M12 30v8M2 38h15" stroke="#333" stroke-width="1.2"/></svg>
<svg class="a" style="left:44px;top:718px" width="42" height="41" viewBox="0 0 42 41"><rect x="0.75" y="0.75" width="39" height="39" fill="#c8c8c8" stroke="#000" stroke-width="1.5"/><path d="M2 2h37M2 2v37" stroke="#fff" stroke-width="1"/><rect x="14" y="5" width="22" height="16" fill="#e8e8e8" stroke="#000" stroke-width="1"/><rect x="15" y="6" width="8" height="14" fill="#fff"/><path d="M26 7v12M29 7v12M32 7v12" stroke="#1aa" stroke-width="1.5"/><rect x="3" y="15" width="23" height="16" fill="#e8e8e8" stroke="#000" stroke-width="1"/><rect x="4" y="16" width="8" height="14" fill="#fff" stroke="#333" stroke-width=".5"/><path d="M15 17v12M18 17v12M21 17v12" stroke="#1aa" stroke-width="1.5"/><path d="M26 35l9-9" stroke="#000" stroke-width="2"/><path d="M36 25v6h-6zM25 36v-6h6z" fill="#000"/></svg>
</body></html>
